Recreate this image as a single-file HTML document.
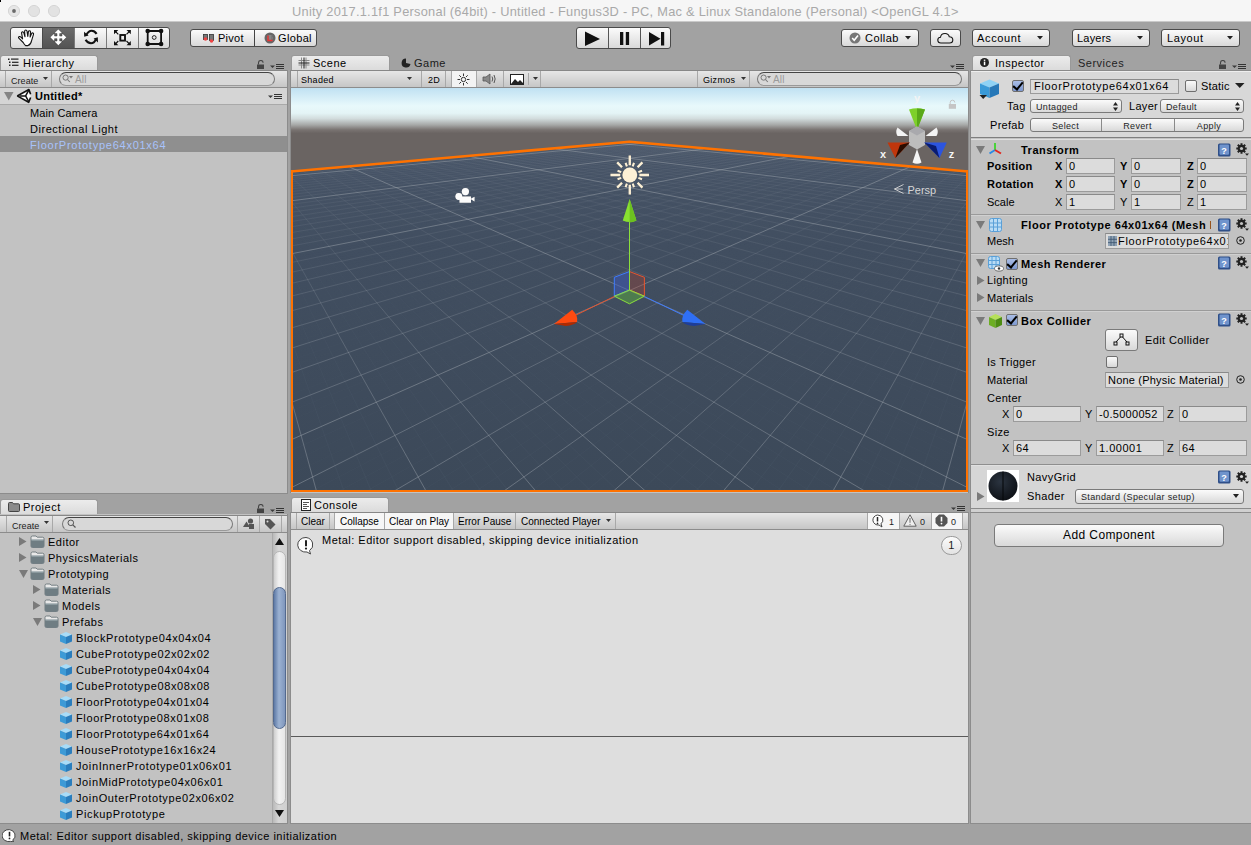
<!DOCTYPE html>
<html><head><meta charset="utf-8">
<style>
*{box-sizing:border-box;margin:0;padding:0}
html,body{width:1251px;height:845px;overflow:hidden;background:#a2a2a2;font-family:"Liberation Sans",sans-serif;font-size:11px;color:#000}
.a{position:absolute}
.t{position:absolute;white-space:nowrap;line-height:14px}
#title{left:0;top:0;width:1251px;height:22px;background:#f6f6f6;border-bottom:1px solid #c9c9c9}
.btn{position:absolute;background:linear-gradient(#fbfbfb,#d9d9d9);border:1px solid #7a7a7a;border-radius:3px}
.panel{position:absolute;background:#c2c2c2;border:1px solid #8a8a8a}
.tab{position:absolute;background:linear-gradient(#ececec,#dadada);border:1px solid #999;border-bottom:none;border-radius:3px 3px 0 0}
.ptb{position:absolute;background:linear-gradient(#e6e6e6,#c6c6c6);border-top:1px solid #878787;border-bottom:1px solid #8c8c8c}
.fld{position:absolute;background:#dcdcdc;border:1px solid #9b9b9b;border-top-color:#8a8a8a}
.hdr{font-weight:bold}
.ls{letter-spacing:0.5px}
.sm{font-size:9px;letter-spacing:0.3px}
.xs{font-size:9px;letter-spacing:0.35px;color:#1e1e1e}
.sm2{font-size:10px;letter-spacing:0px}
.b{font-weight:bold}
.chk{width:12px;height:12px;border:1px solid #6f6f6f;border-radius:2px;background:linear-gradient(#fafafa,#d8d8d8)}
.chk.on{background:linear-gradient(#a9bde6,#7d98cf)}
.chk.on::after{content:"";position:absolute;left:2px;top:-1px;width:4px;height:8px;border:solid #000;border-width:0 2px 2px 0;transform:rotate(40deg)}
.tb{border-color:#4a4a4a}
.srch{background:#d8d8d8;border:1px solid #777;border-top-color:#444;border-bottom-color:#999;border-radius:7px}
</style></head><body>
<div id="title" class="a"></div>
<svg class="a" style="left:0;top:0" width="70" height="22" viewBox="0 0 70 22"><circle cx="14" cy="11" r="5.6" fill="#e6e6e6" stroke="#d3d3d3" stroke-width="0.9"/><circle cx="14" cy="11" r="1.9" fill="#6a6a6a"/><circle cx="34" cy="11" r="5.6" fill="#e2e2e2" stroke="#d3d3d3" stroke-width="0.9"/><circle cx="54" cy="11" r="5.6" fill="#e2e2e2" stroke="#d3d3d3" stroke-width="0.9"/></svg>
<div class="t" id="ttl" style="left:292px;top:3.5px;color:#a9a9a9;font-size:12.8px;line-height:16px;letter-spacing:0.27px">Unity 2017.1.1f1 Personal (64bit) - Untitled - Fungus3D - PC, Mac &amp; Linux Standalone (Personal) &lt;OpenGL 4.1&gt;</div>

<!-- TOOLBAR -->
<div class="btn tb" style="left:10px;top:27px;width:160px;height:22px;overflow:hidden">
  <div class="a" style="left:31px;top:0;width:32px;height:20px;background:linear-gradient(#6a6a6a,#545454)"></div>
  <div class="a" style="left:31px;top:0;width:1px;height:20px;background:#4a4a4a"></div>
  <div class="a" style="left:63px;top:0;width:1px;height:20px;background:#7a7a7a"></div>
  <div class="a" style="left:95px;top:0;width:1px;height:20px;background:#7a7a7a"></div>
  <div class="a" style="left:127px;top:0;width:1px;height:20px;background:#7a7a7a"></div>
</div>
<!-- hand -->
<svg class="a" style="left:17px;top:29px" width="19" height="18" viewBox="0 0 19 18">
 <path d="M6.2 13.5 L1.8 9.2 Q1 8 2.3 7.6 Q3.2 7.4 4.2 8.4 L5.6 9.8 L4.6 4.2 Q4.4 2.9 5.6 2.8 Q6.5 2.8 6.9 4.2 L8 7.8 L7.6 2.2 Q7.7 1 8.8 1 Q9.8 1 10 2.2 L10.8 7.4 L11.4 2.6 Q11.6 1.6 12.6 1.7 Q13.6 1.9 13.5 3 L13.1 8 L14.6 4.6 Q15.1 3.7 16 4 Q16.8 4.4 16.5 5.4 L14.6 11.6 Q13.8 15.6 11 16.6 L8.6 16.6 Q7.2 15.4 6.2 13.5 Z" fill="#fff" stroke="#111" stroke-width="1.1" stroke-linejoin="round"/>
</svg>
<!-- move -->
<svg class="a" style="left:49px;top:28px" width="19" height="19" viewBox="0 0 19 19">
 <path d="M9.3 1 L13.8 5.6 L10.7 5.6 L10.7 8 L13 8 L13 4.9 L17.6 9.3 L13 13.8 L13 10.7 L10.7 10.7 L10.7 13 L13.8 13 L9.3 17.6 L4.8 13 L8 13 L8 10.7 L5.6 10.7 L5.6 13.8 L1 9.3 L5.6 4.9 L5.6 8 L8 8 L8 5.6 L4.8 5.6 Z" fill="#fff" stroke="#3a3a3a" stroke-width="0.5"/>
</svg>
<!-- rotate -->
<svg class="a" style="left:74px;top:26px" width="32" height="24" viewBox="0 0 32 24">
 <path d="M12.3 9 Q14.5 4.8 17.6 4.8 Q20.6 4.8 22.6 7.8" fill="none" stroke="#111" stroke-width="2.1"/>
 <path d="M10 5.8 L10.2 10.8 L14.6 9.6 Z" fill="#111"/>
 <path d="M11.6 13.8 Q13.6 17.3 17 17.3 Q20.2 17.3 21.8 13.4" fill="none" stroke="#111" stroke-width="2.1"/>
 <path d="M24 16.6 L23.8 11.3 L19.6 12.6 Z" fill="#111"/>
</svg>
<!-- scale -->
<svg class="a" style="left:106px;top:26px" width="32" height="24" viewBox="0 0 32 24">
 <rect x="14.3" y="9" width="4.7" height="5.6" fill="#eee" stroke="#111" stroke-width="1.9"/>
 <path d="M8.5 4.5 L12.3 8.3 M24.3 4.5 L20.5 8.3 M8.5 18.8 L12.3 15 M24.3 18.8 L20.5 15" stroke="#111" stroke-width="1.2"/>
 <path d="M8 4 L12.3 4 L8 8.3 Z M24.8 4 L20.5 4 L24.8 8.3 Z M8 19.2 L12.3 19.2 L8 14.9 Z M24.8 19.2 L20.5 19.2 L24.8 14.9 Z" fill="#111"/>
</svg>
<!-- rect -->
<svg class="a" style="left:138px;top:26px" width="32" height="24" viewBox="0 0 32 24">
 <path d="M9.7 5H23.1M9.7 18H23.1M9.7 5V18M23.1 5V18" stroke="#111" stroke-width="1.8"/>
 <circle cx="9.7" cy="5" r="2.3" fill="#111"/><circle cx="23.1" cy="5" r="2.3" fill="#111"/>
 <circle cx="9.7" cy="18" r="2.3" fill="#111"/><circle cx="23.1" cy="18" r="2.3" fill="#111"/>
 <circle cx="16.2" cy="11.5" r="1.9" fill="none" stroke="#111" stroke-width="0.9"/>
</svg>

<!-- pivot/global -->
<div class="btn tb" style="left:190px;top:29px;width:127px;height:18px">
  <div class="a" style="left:63px;top:0;width:1px;height:16px;background:#444"></div>
</div>
<svg class="a" style="left:203px;top:34px" width="12" height="9" viewBox="0 0 12 9">
 <rect x="0.5" y="0.5" width="4" height="5" fill="#777" stroke="#333" stroke-width="0.8"/><circle cx="2.5" cy="5" r="1.8" fill="#e44"/>
 <rect x="6.5" y="0.5" width="4" height="6" fill="#777" stroke="#333" stroke-width="0.8"/><circle cx="8.5" cy="7" r="1.8" fill="#e44"/>
</svg>
<div class="t" style="left:218px;top:31px;letter-spacing:0.25px">Pivot</div>
<svg class="a" style="left:264px;top:32px" width="12" height="12" viewBox="0 0 12 12">
 <circle cx="6" cy="6" r="5.5" fill="#666"/><path d="M3 6h6M6 3v6M3.5 4h5M3.5 8h5" stroke="#aaa" stroke-width="0.6"/>
 <path d="M4 3.5 V8.5 H8.5" fill="none" stroke="#e33" stroke-width="1.4"/>
</svg>
<div class="t" style="left:278px;top:31px;letter-spacing:0.35px">Global</div>

<!-- play -->
<div class="btn tb" style="left:576px;top:27px;width:95px;height:22px">
  <div class="a" style="left:31px;top:0;width:1px;height:20px;background:#555"></div>
  <div class="a" style="left:63px;top:0;width:1px;height:20px;background:#555"></div>
</div>
<svg class="a" style="left:576px;top:27px" width="95" height="22" viewBox="0 0 95 22">
 <path d="M9 4.5 L24 12 L9 19 Z" fill="#111"/>
 <rect x="44" y="5" width="3.3" height="13" fill="#111"/><rect x="49.8" y="5" width="3.3" height="13" fill="#111"/>
 <path d="M73 5 L84.5 11.8 L73 18.5 Z" fill="#111"/><rect x="85" y="5" width="3.2" height="13.5" fill="#111"/>
</svg>

<!-- collab -->
<div class="btn tb" style="left:841px;top:29px;width:78px;height:18px"></div>
<svg class="a" style="left:849px;top:32px" width="12" height="12" viewBox="0 0 12 12">
 <circle cx="6" cy="6" r="5.5" fill="#777"/><path d="M3.2 6 L5.2 8.2 L9 3.5" fill="none" stroke="#fff" stroke-width="1.6"/>
</svg>
<div class="t" style="left:865px;top:31px;letter-spacing:0.45px">Collab</div>
<svg class="a" style="left:905px;top:36px" width="7" height="4" viewBox="0 0 7 4"><path d="M0 0 L6 0 L3 3.5Z" fill="#222"/></svg>
<div class="btn tb" style="left:930px;top:29px;width:31px;height:18px"></div>
<svg class="a" style="left:937px;top:32px" width="17" height="12" viewBox="0 0 17 12">
 <path d="M4 11 Q0.8 11 0.8 8 Q0.8 5.5 3.5 5.3 Q4 1.5 8 1.5 Q11.5 1.5 12.3 4.8 Q15.8 5 15.8 8 Q15.8 11 12.5 11 Z" fill="none" stroke="#111" stroke-width="1.1"/>
</svg>
<div class="btn tb" style="left:972px;top:29px;width:78px;height:18px"></div>
<div class="t" style="left:977px;top:31px;letter-spacing:0.65px">Account</div>
<svg class="a" style="left:1037px;top:36px" width="7" height="4" viewBox="0 0 7 4"><path d="M0 0 L6 0 L3 3.5Z" fill="#222"/></svg>
<div class="btn tb" style="left:1072px;top:29px;width:78px;height:18px"></div>
<div class="t" style="left:1077px;top:31px;letter-spacing:0.2px">Layers</div>
<svg class="a" style="left:1137px;top:36px" width="7" height="4" viewBox="0 0 7 4"><path d="M0 0 L6 0 L3 3.5Z" fill="#222"/></svg>
<div class="btn tb" style="left:1161px;top:29px;width:79px;height:18px"></div>
<div class="t" style="left:1167px;top:31px;letter-spacing:0.6px">Layout</div>
<svg class="a" style="left:1227px;top:36px" width="7" height="4" viewBox="0 0 7 4"><path d="M0 0 L6 0 L3 3.5Z" fill="#222"/></svg>


<!-- panels -->
<!-- HIERARCHY -->
<div class="tab" style="left:0;top:55px;width:98px;height:16px"></div>
<svg class="a" style="left:7px;top:58px" width="13" height="9" viewBox="0 0 13 9">
 <rect x="1" y="0.5" width="1.5" height="1.5" fill="#222"/><rect x="4" y="0.5" width="7.5" height="1.2" fill="#222"/>
 <rect x="2" y="3.5" width="1.5" height="1.5" fill="#222"/><rect x="5" y="3.7" width="6.5" height="1.2" fill="#222"/>
 <rect x="2" y="6.5" width="1.5" height="1.5" fill="#222"/><rect x="5" y="6.7" width="6.5" height="1.2" fill="#222"/>
</svg>
<div class="t ls" style="left:23px;top:56px">Hierarchy</div>
<svg class="a lock" style="left:257px;top:60px" width="8" height="9" viewBox="0 0 8 9"><path d="M1.5 4.5 V2.8 A2.3 2.3 0 0 1 6.1 2.8" fill="none" stroke="#444" stroke-width="1.1"/><rect x="0" y="4.5" width="7" height="4.5" fill="#444"/></svg>
<svg class="a" style="left:269px;top:63px" width="16" height="7" viewBox="0 0 16 7"><path d="M1 2.5 L6 2.5 L3.5 5Z" fill="#3a3a3a"/><path d="M7 1.5h8M7 3.5h8M7 5.5h8" stroke="#333" stroke-width="1"/></svg>
<div class="a" style="left:0;top:70px;width:288px;height:424px;background:#c2c2c2;border-right:1px solid #8c8c8c;border-bottom:1px solid #8c8c8c"></div>
<div class="ptb" style="left:0;top:70px;width:287px;height:18px"></div>
<div class="a" style="left:5px;top:71px;width:1px;height:16px;background:#a8a8a8"></div>
<div class="a" style="left:51px;top:71px;width:1px;height:16px;background:#a8a8a8"></div>
<div class="t" style="left:11px;top:74px;color:#222;font-size:9px;letter-spacing:0.05px">Create</div>
<svg class="a" style="left:43px;top:77px" width="5" height="4" viewBox="0 0 5 4"><path d="M0 0 L5 0 L2.5 3Z" fill="#333"/></svg>
<div class="a srch" style="left:59px;top:72px;width:216px;height:14px"></div>
<svg class="a" style="left:62px;top:74px" width="12" height="9" viewBox="0 0 12 9"><circle cx="3.6" cy="3.6" r="2.6" fill="none" stroke="#777" stroke-width="1"/><path d="M5.5 5.5 L7.8 8" stroke="#777" stroke-width="1.1"/><path d="M7 2 L11 2 L9 4.5Z" fill="#777"/></svg>
<div class="t" style="left:75px;top:73px;color:#9a9a9a;font-size:10px;letter-spacing:0.2px">All</div>

<div class="a" style="left:0;top:88px;width:287px;height:17px;background:#d5d5d5;border-bottom:1px solid #a9a9a9"></div>
<svg class="a" style="left:4px;top:92px" width="10" height="9" viewBox="0 0 10 9"><path d="M0 0 L9.5 0 L4.75 8.5Z" fill="#858585"/></svg>
<svg class="a" style="left:14px;top:87px" width="20" height="18" viewBox="0 0 20 18">
 <path d="M3.2 8.9 L14.9 2.6 L16.6 8.9 L14.7 15.3 Z" fill="#fff"/>
 <path d="M3.2 8.9 L14.9 2.6 L16.6 7.3 M16.6 10.5 L14.7 15.3 L3.2 8.9" fill="none" stroke="#111" stroke-width="1.65" stroke-linejoin="round"/>
 <path d="M5.5 8.9 H11.6 L14.8 3.2 M11.6 8.9 L14.7 14.7" fill="none" stroke="#111" stroke-width="1.45"/>
</svg>
<div class="t" style="left:35px;top:89px;font-weight:bold;letter-spacing:0.25px">Untitled*</div>
<svg class="a" style="left:267px;top:93px" width="16" height="7" viewBox="0 0 16 7"><path d="M1 2.5 L6 2.5 L3.5 5Z" fill="#3a3a3a"/><path d="M7 1.5h8M7 3.5h8M7 5.5h8" stroke="#333" stroke-width="1"/></svg>
<div class="t" style="left:30px;top:106px;letter-spacing:0.13px">Main Camera</div>
<div class="t" style="left:30px;top:122px;letter-spacing:0.54px">Directional Light</div>
<div class="a" style="left:0;top:136px;width:287px;height:16px;background:#8f8f8f"></div>
<div class="t" style="left:30px;top:138px;color:#a8c2fb;letter-spacing:0.75px">FloorPrototype64x01x64</div>

<!-- SCENE -->
<div class="tab" style="left:291px;top:55px;width:99px;height:16px"></div>
<svg class="a" style="left:298px;top:57px" width="12" height="12" viewBox="0 0 12 12"><path d="M3.5 0.5V11.5M8 0.5V11.5M0.5 3.5H11.5M0.5 8H11.5" stroke="#888" stroke-width="1"/><path d="M6 0.5V11.5M0.5 6H11.5" stroke="#222" stroke-width="1"/></svg>
<div class="t ls" style="left:313px;top:56px">Scene</div>
<svg class="a" style="left:401px;top:58px" width="10" height="10" viewBox="0 0 10 10"><path d="M5 0.5 A4.5 4.5 0 1 0 9.5 6 L5 5 Z" fill="#222"/><circle cx="6.5" cy="3" r="1.2" fill="#a2a2a2"/></svg>
<div class="t ls" style="left:414px;top:56px;color:#1a1a1a">Game</div>
<svg class="a" style="left:949px;top:63px" width="16" height="7" viewBox="0 0 16 7"><path d="M1 2.5 L6 2.5 L3.5 5Z" fill="#3a3a3a"/><path d="M7 1.5h8M7 3.5h8M7 5.5h8" stroke="#333" stroke-width="1"/></svg>
<div class="a" style="left:290px;top:70px;width:679px;height:423px;background:#c2c2c2;border:1px solid #8c8c8c;border-top:none;border-bottom:none"></div>
<div class="ptb" style="left:291px;top:70px;width:677px;height:18px"></div>
<div class="a" style="left:297px;top:71px;width:1px;height:16px;background:#a8a8a8"></div>
<div class="t sm" style="left:301px;top:73px">Shaded</div>
<svg class="a" style="left:407px;top:77px" width="5" height="4" viewBox="0 0 5 4"><path d="M0 0 L5 0 L2.5 3Z" fill="#333"/></svg>
<div class="a" style="left:421px;top:71px;width:1px;height:16px;background:#a8a8a8"></div>
<div class="t sm" style="left:428px;top:73px">2D</div>
<div class="a" style="left:445px;top:71px;width:1px;height:16px;background:#a8a8a8"></div>
<div class="a" style="left:451px;top:71px;width:26px;height:16px;background:#f3f3f3;border-left:1px solid #a8a8a8;border-right:1px solid #a8a8a8"></div>
<svg class="a" style="left:457px;top:73px" width="13" height="13" viewBox="0 0 13 13"><circle cx="6.5" cy="6.5" r="2.2" fill="none" stroke="#333" stroke-width="1"/><path d="M6.5 0.5V3M6.5 10V12.5M0.5 6.5H3M10 6.5H12.5M2.3 2.3L4 4M9 9L10.7 10.7M2.3 10.7L4 9M9 4L10.7 2.3" stroke="#333" stroke-width="1"/></svg>
<svg class="a" style="left:482px;top:73px" width="15" height="12" viewBox="0 0 15 12"><path d="M1 4H4L8 1V11L4 8H1Z" fill="#888" stroke="#555" stroke-width="0.8"/><path d="M10 3.5Q11.5 6 10 8.5M12 2Q14.3 6 12 10" fill="none" stroke="#555" stroke-width="1"/></svg>
<div class="a" style="left:503px;top:71px;width:1px;height:16px;background:#a8a8a8"></div>
<svg class="a" style="left:510px;top:74px" width="14" height="11" viewBox="0 0 14 11"><rect x="0.5" y="0.5" width="13" height="10" fill="#fff" stroke="#222" stroke-width="1"/><path d="M1 10L5 5L8 8L10 6L13 9V10Z" fill="#222"/></svg>
<div class="a" style="left:528px;top:73px;width:1px;height:12px;background:#a8a8a8"></div>
<svg class="a" style="left:533px;top:77px" width="5" height="4" viewBox="0 0 5 4"><path d="M0 0 L5 0 L2.5 3Z" fill="#333"/></svg>
<div class="a" style="left:540px;top:71px;width:1px;height:16px;background:#a8a8a8"></div>
<div class="a" style="left:697px;top:71px;width:1px;height:16px;background:#a8a8a8"></div>
<div class="t sm" style="left:703px;top:73px">Gizmos</div>
<svg class="a" style="left:741px;top:77px" width="5" height="4" viewBox="0 0 5 4"><path d="M0 0 L5 0 L2.5 3Z" fill="#333"/></svg>
<div class="a" style="left:749px;top:71px;width:1px;height:16px;background:#a8a8a8"></div>
<div class="a srch" style="left:757px;top:72px;width:205px;height:14px"></div>
<svg class="a" style="left:760px;top:74px" width="12" height="9" viewBox="0 0 12 9"><circle cx="3.6" cy="3.6" r="2.6" fill="none" stroke="#777" stroke-width="1"/><path d="M5.5 5.5 L7.8 8" stroke="#777" stroke-width="1.1"/><path d="M7 2 L11 2 L9 4.5Z" fill="#777"/></svg>
<div class="t" style="left:773px;top:73px;color:#9a9a9a;font-size:10px;letter-spacing:0.2px">All</div>
<svg class="a" style="left:291px;top:88px" width="677" height="404" viewBox="0 0 677 404">
<defs>
 <linearGradient id="sky" x1="0" y1="0" x2="0" y2="1">
  <stop offset="0" stop-color="#c0e1f2"/><stop offset="0.4" stop-color="#e8f9fb"/><stop offset="0.56" stop-color="#e4f4f6"/>
  <stop offset="0.68" stop-color="#d2dcdd"/><stop offset="0.82" stop-color="#a6a8a7"/><stop offset="0.93" stop-color="#797371"/><stop offset="1" stop-color="#6b6563"/>
 </linearGradient>
 <linearGradient id="flr" x1="0" y1="54.5" x2="0" y2="405" gradientUnits="userSpaceOnUse">
  <stop offset="0" stop-color="#485568"/><stop offset="0.3" stop-color="#414e60"/><stop offset="1" stop-color="#3c4959"/>
 </linearGradient>
 <linearGradient id="lg" x1="0" y1="54.5" x2="0" y2="404" gradientUnits="userSpaceOnUse">
  <stop offset="0" stop-color="#a3aab2" stop-opacity="0.05"/><stop offset="0.3" stop-color="#a3aab2" stop-opacity="0.13"/><stop offset="0.6" stop-color="#a3aab2" stop-opacity="0.3"/><stop offset="1" stop-color="#a3aab2" stop-opacity="0.44"/>
 </linearGradient>
 <clipPath id="fc"><polygon points="338.5,54.5 2022.1,202.5 3625.4,437.0 -2948.4,437.0 -1345.1,202.5"/></clipPath>
</defs>
<rect x="0" y="0" width="677" height="45" fill="url(#sky)"/>
<rect x="0" y="45" width="677" height="360" fill="#6a6462"/>
<polygon points="338.5,54.5 2022.1,202.5 3625.4,437.0 -2948.4,437.0 -1345.1,202.5" fill="url(#flr)"/>
<g clip-path="url(#fc)">
<path d="M-2917.85 436.96L-1311.83 199.58L-1313.36 199.71L-2919.28 436.96ZM-2888.01 436.96L-1280.36 196.81L-1281.85 196.94L-2889.45 436.96ZM-2858.18 436.96L-1249.83 194.13L-1251.28 194.25L-2859.61 436.96ZM-2798.52 436.96L-1191.45 188.99L-1192.81 189.11L-2799.95 436.96ZM-2768.69 436.96L-1163.51 186.54L-1164.83 186.65L-2770.12 436.96ZM-2738.85 436.96L-1136.36 184.15L-1137.65 184.26L-2740.29 436.96ZM-2679.19 436.96L-1084.30 179.57L-1085.52 179.68L-2680.62 436.96ZM-2649.36 436.96L-1059.33 177.37L-1060.51 177.48L-2650.79 436.96ZM-2619.53 436.96L-1035.03 175.24L-1036.18 175.34L-2620.96 436.96ZM-2559.86 436.96L-988.32 171.13L-989.42 171.23L-2561.30 436.96ZM-2530.03 436.96L-965.87 169.16L-966.94 169.25L-2531.46 436.96ZM-2500.20 436.96L-943.99 167.23L-945.03 167.32L-2501.63 436.96ZM-2440.54 436.96L-901.85 163.53L-902.84 163.61L-2441.97 436.96ZM-2410.70 436.96L-881.55 161.74L-882.52 161.83L-2412.14 436.96ZM-2380.87 436.96L-861.75 160.00L-862.69 160.08L-2382.31 436.96ZM-2321.21 436.96L-823.54 156.64L-824.43 156.72L-2322.64 436.96ZM-2291.38 436.96L-805.10 155.02L-805.98 155.10L-2292.81 436.96ZM-2261.55 436.96L-787.09 153.44L-787.95 153.51L-2262.98 436.96ZM-2201.88 436.96L-752.28 150.38L-753.10 150.45L-2203.31 436.96ZM-2172.05 436.96L-735.46 148.90L-736.26 148.97L-2173.48 436.96ZM-2142.22 436.96L-719.01 147.45L-719.79 147.52L-2143.65 436.96ZM-2082.56 436.96L-687.18 144.65L-687.92 144.72L-2083.99 436.96ZM-2052.72 436.96L-671.77 143.30L-672.50 143.36L-2054.16 436.96ZM-2022.89 436.96L-656.68 141.97L-657.40 142.03L-2024.32 436.96ZM-1963.23 436.96L-627.45 139.40L-628.14 139.46L-1964.66 436.96ZM-1933.40 436.96L-613.28 138.15L-613.95 138.21L-1934.83 436.96ZM-1903.56 436.96L-599.40 136.93L-600.06 136.99L-1905.00 436.96ZM-1843.90 436.96L-572.46 134.56L-573.10 134.62L-1845.33 436.96ZM-1814.07 436.96L-559.39 133.42L-560.02 133.47L-1815.50 436.96ZM-1784.24 436.96L-546.58 132.29L-547.19 132.34L-1785.67 436.96ZM-1724.57 436.96L-521.68 130.10L-522.27 130.15L-1726.01 436.96ZM-1694.74 436.96L-509.58 129.04L-510.16 129.09L-1696.17 436.96ZM-1664.91 436.96L-497.71 127.99L-498.28 128.04L-1666.34 436.96ZM-1605.25 436.96L-474.63 125.96L-475.17 126.01L-1606.68 436.96ZM-1575.41 436.96L-463.40 124.97L-463.94 125.02L-1576.85 436.96ZM-1545.58 436.96L-452.38 124.01L-452.90 124.05L-1547.02 436.96ZM-1485.92 436.96L-430.92 122.12L-431.42 122.16L-1487.35 436.96ZM-1456.09 436.96L-420.47 121.20L-420.97 121.24L-1457.52 436.96ZM-1426.26 436.96L-410.20 120.30L-410.69 120.34L-1427.69 436.96ZM-1366.59 436.96L-390.20 118.54L-390.67 118.58L-1368.02 436.96ZM-1336.76 436.96L-380.45 117.68L-380.91 117.72L-1338.19 436.96ZM-1306.93 436.96L-370.87 116.84L-371.32 116.88L-1308.36 436.96ZM-1247.27 436.96L-352.18 115.19L-352.62 115.23L-1248.70 436.96ZM-1217.43 436.96L-343.06 114.39L-343.50 114.43L-1218.87 436.96ZM-1187.60 436.96L-334.10 113.60L-334.52 113.64L-1189.03 436.96ZM-1127.94 436.96L-316.59 112.07L-317.01 112.10L-1129.37 436.96ZM-1098.11 436.96L-308.05 111.31L-308.46 111.35L-1099.54 436.96ZM-1068.27 436.96L-299.65 110.58L-300.05 110.61L-1069.71 436.96ZM-1008.61 436.96L-283.22 109.13L-283.61 109.17L-1010.04 436.96ZM-978.78 436.96L-275.20 108.43L-275.58 108.46L-980.21 436.96ZM-948.95 436.96L-267.30 107.73L-267.68 107.76L-950.38 436.96ZM-889.28 436.96L-251.86 106.37L-252.23 106.41L-890.72 436.96ZM-859.45 436.96L-244.31 105.71L-244.67 105.74L-860.88 436.96ZM-829.62 436.96L-236.88 105.06L-237.23 105.09L-831.05 436.96ZM-769.96 436.96L-222.34 103.78L-222.68 103.81L-771.39 436.96ZM-740.13 436.96L-215.22 103.15L-215.56 103.18L-741.56 436.96ZM-710.29 436.96L-208.21 102.54L-208.54 102.57L-711.73 436.96ZM-650.63 436.96L-194.49 101.33L-194.81 101.36L-652.06 436.96ZM-620.80 436.96L-187.77 100.74L-188.09 100.77L-622.23 436.96ZM-590.97 436.96L-181.15 100.16L-181.46 100.18L-592.40 436.96ZM-531.30 436.96L-168.18 99.02L-168.48 99.04L-532.73 436.96ZM-501.47 436.96L-161.83 98.46L-162.13 98.48L-502.90 436.96ZM-471.64 436.96L-155.56 97.91L-155.86 97.93L-473.07 436.96ZM-411.98 436.96L-143.28 96.83L-143.57 96.85L-413.41 436.96ZM-382.14 436.96L-137.27 96.30L-137.55 96.32L-383.58 436.96ZM-352.31 436.96L-131.33 95.78L-131.61 95.80L-353.74 436.96ZM-292.65 436.96L-119.69 94.75L-119.97 94.78L-294.08 436.96ZM-262.82 436.96L-113.99 94.25L-114.26 94.27L-264.25 436.96ZM-232.98 436.96L-108.35 93.76L-108.62 93.78L-234.42 436.96ZM-173.32 436.96L-97.30 92.78L-97.57 92.81L-174.75 436.96ZM-143.49 436.96L-91.88 92.31L-92.14 92.33L-144.92 436.96ZM-113.66 436.96L-86.53 91.84L-86.79 91.86L-115.09 436.96ZM-53.99 436.96L-76.03 90.91L-76.28 90.94L-55.43 436.96ZM-24.16 436.96L-70.88 90.46L-71.12 90.48L-25.59 436.96ZM5.67 436.96L-65.79 90.01L-66.03 90.03L4.24 436.96ZM65.33 436.96L-55.79 89.13L-56.03 89.15L63.90 436.96ZM95.16 436.96L-50.88 88.70L-51.12 88.72L93.73 436.96ZM125.00 436.96L-46.03 88.28L-46.27 88.30L123.56 436.96ZM184.66 436.96L-36.51 87.44L-36.74 87.46L183.23 436.96ZM214.49 436.96L-31.83 87.03L-32.05 87.05L213.06 436.96ZM244.32 436.96L-27.21 86.62L-27.43 86.64L242.89 436.96ZM303.99 436.96L-18.12 85.82L-18.34 85.84L302.56 436.96ZM333.82 436.96L-13.66 85.43L-13.87 85.45L332.39 436.96ZM363.65 436.96L-9.24 85.04L-9.45 85.06L362.22 436.96ZM423.31 436.96L-0.57 84.28L-0.77 84.30L421.88 436.96ZM453.15 436.96L3.70 83.90L3.50 83.92L451.71 436.96ZM482.98 436.96L7.92 83.53L7.72 83.55L481.55 436.96ZM542.64 436.96L16.21 82.80L16.02 82.82L541.21 436.96ZM572.47 436.96L20.29 82.44L20.10 82.46L571.04 436.96ZM602.31 436.96L24.33 82.09L24.13 82.11L600.87 436.96ZM661.97 436.96L32.27 81.39L32.08 81.41L660.54 436.96ZM691.80 436.96L36.17 81.05L35.98 81.06L690.37 436.96ZM721.63 436.96L40.03 80.71L39.85 80.72L720.20 436.96ZM781.30 436.96L47.64 80.04L47.46 80.05L779.86 436.96ZM811.13 436.96L51.38 79.71L51.20 79.73L809.70 436.96ZM840.96 436.96L55.08 79.38L54.90 79.40L839.53 436.96ZM900.62 436.96L62.37 78.74L62.20 78.76L899.19 436.96ZM930.45 436.96L65.96 78.43L65.79 78.44L929.02 436.96ZM960.29 436.96L69.51 78.12L69.34 78.13L958.85 436.96ZM1019.95 436.96L76.51 77.50L76.34 77.52L1018.52 436.96ZM1049.78 436.96L79.95 77.20L79.79 77.21L1048.35 436.96ZM1079.61 436.96L83.36 76.90L83.20 76.91L1078.18 436.96ZM1139.28 436.96L90.08 76.31L89.92 76.32L1137.85 436.96ZM1169.11 436.96L93.39 76.02L93.23 76.03L1167.68 436.96ZM1198.94 436.96L96.66 75.73L96.51 75.74L1197.51 436.96ZM1258.60 436.96L103.12 75.16L102.97 75.17L1257.17 436.96ZM1288.44 436.96L106.30 74.88L106.15 74.89L1287.00 436.96ZM1318.27 436.96L109.45 74.60L109.30 74.62L1316.84 436.96ZM1377.93 436.96L115.66 74.06L115.51 74.07L1376.50 436.96ZM1407.76 436.96L118.72 73.79L118.58 73.80L1406.33 436.96ZM1437.60 436.96L121.75 73.52L121.61 73.53L1436.16 436.96ZM1497.26 436.96L127.73 73.00L127.59 73.01L1495.83 436.96ZM1527.09 436.96L130.68 72.74L130.54 72.75L1525.66 436.96ZM1556.92 436.96L133.60 72.48L133.46 72.49L1555.49 436.96ZM1616.59 436.96L139.36 71.97L139.22 71.99L1615.15 436.96ZM1646.42 436.96L142.20 71.72L142.06 71.74L1644.99 436.96ZM1676.25 436.96L145.01 71.48L144.88 71.49L1674.82 436.96ZM1735.91 436.96L150.56 70.99L150.43 71.00L1734.48 436.96ZM1765.74 436.96L153.30 70.75L153.17 70.76L1764.31 436.96ZM1795.58 436.96L156.01 70.51L155.88 70.52L1794.14 436.96ZM1855.24 436.96L161.37 70.04L161.24 70.05L1853.81 436.96ZM1885.07 436.96L164.01 69.81L163.88 69.82L1883.64 436.96ZM1914.90 436.96L166.62 69.58L166.50 69.59L1913.47 436.96ZM1974.57 436.96L171.79 69.12L171.67 69.13L1973.14 436.96ZM2004.40 436.96L174.34 68.90L174.22 68.91L2002.97 436.96ZM2034.23 436.96L176.87 68.68L176.75 68.69L2032.80 436.96ZM2093.89 436.96L181.86 68.24L181.74 68.25L2092.46 436.96ZM2123.73 436.96L184.32 68.02L184.21 68.03L2122.29 436.96ZM2153.56 436.96L186.77 67.81L186.65 67.82L2152.13 436.96ZM2213.22 436.96L191.59 67.38L191.47 67.39L2211.79 436.96ZM2243.05 436.96L193.97 67.17L193.86 67.18L2241.62 436.96ZM2272.88 436.96L196.33 66.96L196.22 66.97L2271.45 436.96ZM2332.55 436.96L200.99 66.55L200.88 66.56L2331.12 436.96ZM2362.38 436.96L203.30 66.35L203.19 66.36L2360.95 436.96ZM2392.21 436.96L205.58 66.15L205.47 66.16L2390.78 436.96ZM2451.88 436.96L210.09 65.75L209.98 65.76L2450.44 436.96ZM2481.71 436.96L212.32 65.56L212.21 65.57L2480.28 436.96ZM2511.54 436.96L214.53 65.36L214.42 65.37L2510.11 436.96ZM2571.20 436.96L218.90 64.98L218.79 64.99L2569.77 436.96ZM2601.03 436.96L221.05 64.79L220.95 64.80L2599.60 436.96ZM2630.87 436.96L223.19 64.60L223.09 64.61L2629.43 436.96ZM2690.53 436.96L227.42 64.23L227.32 64.24L2689.10 436.96ZM2720.36 436.96L229.51 64.05L229.41 64.06L2718.93 436.96ZM2750.19 436.96L231.59 63.86L231.49 63.87L2748.76 436.96ZM2809.86 436.96L235.68 63.50L235.59 63.51L2808.43 436.96ZM2839.69 436.96L237.71 63.33L237.61 63.33L2838.26 436.96ZM2869.52 436.96L239.72 63.15L239.62 63.16L2868.09 436.96ZM2929.18 436.96L243.69 62.80L243.60 62.81L2927.75 436.96ZM2959.02 436.96L245.66 62.63L245.56 62.64L2957.58 436.96ZM2988.85 436.96L247.60 62.46L247.51 62.46L2987.42 436.96ZM3048.51 436.96L251.46 62.12L251.37 62.13L3047.08 436.96ZM3078.34 436.96L253.36 61.95L253.27 61.96L3076.91 436.96ZM3108.17 436.96L255.25 61.78L255.16 61.79L3106.74 436.96ZM3167.84 436.96L258.99 61.45L258.90 61.46L3166.41 436.96ZM3197.67 436.96L260.84 61.29L260.75 61.30L3196.24 436.96ZM3227.50 436.96L262.68 61.13L262.59 61.14L3226.07 436.96ZM3287.17 436.96L266.31 60.81L266.22 60.82L3285.73 436.96ZM3317.00 436.96L268.10 60.65L268.01 60.66L3315.57 436.96ZM3346.83 436.96L269.88 60.50L269.80 60.50L3345.40 436.96ZM3406.49 436.96L273.41 60.19L273.32 60.19L3405.06 436.96ZM3436.32 436.96L275.15 60.03L275.07 60.04L3434.89 436.96ZM3466.16 436.96L276.88 59.88L276.80 59.89L3464.72 436.96ZM3525.82 436.96L280.31 59.58L280.23 59.59L3524.39 436.96ZM3555.65 436.96L282.00 59.43L281.92 59.44L3554.22 436.96ZM3585.48 436.96L283.68 59.28L283.60 59.29L3584.05 436.96ZM3564.06 427.99L3559.38 427.31L287.01 58.99L286.93 59.00ZM3469.63 414.18L3465.26 413.54L288.66 58.85L288.58 58.85ZM3381.35 401.27L3377.25 400.68L290.30 58.70L290.22 58.71ZM3220.97 377.82L3217.36 377.29L293.53 58.42L293.46 58.42ZM3147.92 367.14L3144.52 366.64L295.13 58.28L295.06 58.28ZM3079.07 357.07L3075.87 356.60L296.73 58.14L296.65 58.14ZM2952.63 338.58L2949.76 338.16L299.87 57.86L299.80 57.87ZM2894.44 330.07L2891.72 329.67L301.43 57.72L301.36 57.73ZM2839.25 322.00L2836.67 321.62L302.98 57.59L302.91 57.59ZM2737.01 307.05L2734.68 306.71L306.05 57.32L305.97 57.32ZM2689.56 300.11L2687.34 299.79L307.56 57.18L307.49 57.19ZM2644.34 293.50L2642.22 293.19L309.07 57.05L309.00 57.06ZM2559.96 281.16L2558.03 280.88L312.05 56.79L311.98 56.80ZM2520.54 275.39L2518.69 275.12L313.53 56.66L313.46 56.67ZM2482.81 269.88L2481.04 269.62L315.00 56.53L314.93 56.54ZM2411.99 259.52L2410.36 259.28L317.90 56.27L317.83 56.28ZM2378.71 254.65L2377.15 254.42L319.34 56.15L319.27 56.15ZM2346.75 249.98L2345.25 249.76L320.77 56.02L320.70 56.03ZM2286.47 241.16L2285.08 240.96L323.60 55.77L323.53 55.78ZM2258.01 237.00L2256.67 236.81L325.00 55.65L324.93 55.66ZM2230.59 232.99L2229.30 232.80L326.39 55.53L326.33 55.53ZM2178.65 225.40L2177.45 225.22L329.15 55.29L329.08 55.29ZM2154.04 221.80L2152.88 221.63L330.52 55.17L330.45 55.17ZM2130.26 218.32L2129.13 218.16L331.87 55.05L331.81 55.05ZM2085.04 211.71L2084.00 211.56L334.56 54.81L334.50 54.82ZM2063.54 208.56L2062.52 208.42L335.89 54.69L335.83 54.70ZM2042.72 205.52L2041.73 205.38L337.22 54.58L337.15 54.58Z" fill="#8d99a6" fill-opacity="0.06"/>
<path d="M3594.85 436.96L1988.83 199.58L1990.36 199.71L3596.28 436.96ZM3565.01 436.96L1957.36 196.81L1958.85 196.94L3566.45 436.96ZM3535.18 436.96L1926.83 194.13L1928.28 194.25L3536.61 436.96ZM3475.52 436.96L1868.45 188.99L1869.81 189.11L3476.95 436.96ZM3445.69 436.96L1840.51 186.54L1841.83 186.65L3447.12 436.96ZM3415.85 436.96L1813.36 184.15L1814.65 184.26L3417.29 436.96ZM3356.19 436.96L1761.30 179.57L1762.52 179.68L3357.62 436.96ZM3326.36 436.96L1736.33 177.37L1737.51 177.48L3327.79 436.96ZM3296.53 436.96L1712.03 175.24L1713.18 175.34L3297.96 436.96ZM3236.86 436.96L1665.32 171.13L1666.42 171.23L3238.30 436.96ZM3207.03 436.96L1642.87 169.16L1643.94 169.25L3208.46 436.96ZM3177.20 436.96L1620.99 167.23L1622.03 167.32L3178.63 436.96ZM3117.54 436.96L1578.85 163.53L1579.84 163.61L3118.97 436.96ZM3087.70 436.96L1558.55 161.74L1559.52 161.83L3089.14 436.96ZM3057.87 436.96L1538.75 160.00L1539.69 160.08L3059.31 436.96ZM2998.21 436.96L1500.54 156.64L1501.43 156.72L2999.64 436.96ZM2968.38 436.96L1482.10 155.02L1482.98 155.10L2969.81 436.96ZM2938.55 436.96L1464.09 153.44L1464.95 153.51L2939.98 436.96ZM2878.88 436.96L1429.28 150.38L1430.10 150.45L2880.31 436.96ZM2849.05 436.96L1412.46 148.90L1413.26 148.97L2850.48 436.96ZM2819.22 436.96L1396.01 147.45L1396.79 147.52L2820.65 436.96ZM2759.56 436.96L1364.18 144.65L1364.92 144.72L2760.99 436.96ZM2729.72 436.96L1348.77 143.30L1349.50 143.36L2731.16 436.96ZM2699.89 436.96L1333.68 141.97L1334.40 142.03L2701.32 436.96ZM2640.23 436.96L1304.45 139.40L1305.14 139.46L2641.66 436.96ZM2610.40 436.96L1290.28 138.15L1290.95 138.21L2611.83 436.96ZM2580.56 436.96L1276.40 136.93L1277.06 136.99L2582.00 436.96ZM2520.90 436.96L1249.46 134.56L1250.10 134.62L2522.33 436.96ZM2491.07 436.96L1236.39 133.42L1237.02 133.47L2492.50 436.96ZM2461.24 436.96L1223.58 132.29L1224.19 132.34L2462.67 436.96ZM2401.57 436.96L1198.68 130.10L1199.27 130.15L2403.01 436.96ZM2371.74 436.96L1186.58 129.04L1187.16 129.09L2373.17 436.96ZM2341.91 436.96L1174.71 127.99L1175.28 128.04L2343.34 436.96ZM2282.25 436.96L1151.63 125.96L1152.17 126.01L2283.68 436.96ZM2252.41 436.96L1140.40 124.97L1140.94 125.02L2253.85 436.96ZM2222.58 436.96L1129.38 124.01L1129.90 124.05L2224.02 436.96ZM2162.92 436.96L1107.92 122.12L1108.42 122.16L2164.35 436.96ZM2133.09 436.96L1097.47 121.20L1097.97 121.24L2134.52 436.96ZM2103.26 436.96L1087.20 120.30L1087.69 120.34L2104.69 436.96ZM2043.59 436.96L1067.20 118.54L1067.67 118.58L2045.02 436.96ZM2013.76 436.96L1057.45 117.68L1057.91 117.72L2015.19 436.96ZM1983.93 436.96L1047.87 116.84L1048.32 116.88L1985.36 436.96ZM1924.27 436.96L1029.18 115.19L1029.62 115.23L1925.70 436.96ZM1894.43 436.96L1020.06 114.39L1020.50 114.43L1895.87 436.96ZM1864.60 436.96L1011.10 113.60L1011.52 113.64L1866.03 436.96ZM1804.94 436.96L993.59 112.07L994.01 112.10L1806.37 436.96ZM1775.11 436.96L985.05 111.31L985.46 111.35L1776.54 436.96ZM1745.27 436.96L976.65 110.58L977.05 110.61L1746.71 436.96ZM1685.61 436.96L960.22 109.13L960.61 109.17L1687.04 436.96ZM1655.78 436.96L952.20 108.43L952.58 108.46L1657.21 436.96ZM1625.95 436.96L944.30 107.73L944.68 107.76L1627.38 436.96ZM1566.28 436.96L928.86 106.37L929.23 106.41L1567.72 436.96ZM1536.45 436.96L921.31 105.71L921.67 105.74L1537.88 436.96ZM1506.62 436.96L913.88 105.06L914.23 105.09L1508.05 436.96ZM1446.96 436.96L899.34 103.78L899.68 103.81L1448.39 436.96ZM1417.13 436.96L892.22 103.15L892.56 103.18L1418.56 436.96ZM1387.29 436.96L885.21 102.54L885.54 102.57L1388.73 436.96ZM1327.63 436.96L871.49 101.33L871.81 101.36L1329.06 436.96ZM1297.80 436.96L864.77 100.74L865.09 100.77L1299.23 436.96ZM1267.97 436.96L858.15 100.16L858.46 100.18L1269.40 436.96ZM1208.30 436.96L845.18 99.02L845.48 99.04L1209.73 436.96ZM1178.47 436.96L838.83 98.46L839.13 98.48L1179.90 436.96ZM1148.64 436.96L832.56 97.91L832.86 97.93L1150.07 436.96ZM1088.98 436.96L820.28 96.83L820.57 96.85L1090.41 436.96ZM1059.14 436.96L814.27 96.30L814.55 96.32L1060.58 436.96ZM1029.31 436.96L808.33 95.78L808.61 95.80L1030.74 436.96ZM969.65 436.96L796.69 94.75L796.97 94.78L971.08 436.96ZM939.82 436.96L790.99 94.25L791.26 94.27L941.25 436.96ZM909.98 436.96L785.35 93.76L785.62 93.78L911.42 436.96ZM850.32 436.96L774.30 92.78L774.57 92.81L851.75 436.96ZM820.49 436.96L768.88 92.31L769.14 92.33L821.92 436.96ZM790.66 436.96L763.53 91.84L763.79 91.86L792.09 436.96ZM730.99 436.96L753.03 90.91L753.28 90.94L732.43 436.96ZM701.16 436.96L747.88 90.46L748.12 90.48L702.59 436.96ZM671.33 436.96L742.79 90.01L743.03 90.03L672.76 436.96ZM611.67 436.96L732.79 89.13L733.03 89.15L613.10 436.96ZM581.84 436.96L727.88 88.70L728.12 88.72L583.27 436.96ZM552.00 436.96L723.03 88.28L723.27 88.30L553.44 436.96ZM492.34 436.96L713.51 87.44L713.74 87.46L493.77 436.96ZM462.51 436.96L708.83 87.03L709.05 87.05L463.94 436.96ZM432.68 436.96L704.21 86.62L704.43 86.64L434.11 436.96ZM373.01 436.96L695.12 85.82L695.34 85.84L374.44 436.96ZM343.18 436.96L690.66 85.43L690.87 85.45L344.61 436.96ZM313.35 436.96L686.24 85.04L686.45 85.06L314.78 436.96ZM253.69 436.96L677.57 84.28L677.77 84.30L255.12 436.96ZM223.85 436.96L673.30 83.90L673.50 83.92L225.29 436.96ZM194.02 436.96L669.08 83.53L669.28 83.55L195.45 436.96ZM134.36 436.96L660.79 82.80L660.98 82.82L135.79 436.96ZM104.53 436.96L656.71 82.44L656.90 82.46L105.96 436.96ZM74.69 436.96L652.67 82.09L652.87 82.11L76.13 436.96ZM15.03 436.96L644.73 81.39L644.92 81.41L16.46 436.96ZM-14.80 436.96L640.83 81.05L641.02 81.06L-13.37 436.96ZM-44.63 436.96L636.97 80.71L637.15 80.72L-43.20 436.96ZM-104.30 436.96L629.36 80.04L629.54 80.05L-102.86 436.96ZM-134.13 436.96L625.62 79.71L625.80 79.73L-132.70 436.96ZM-163.96 436.96L621.92 79.38L622.10 79.40L-162.53 436.96ZM-223.62 436.96L614.63 78.74L614.80 78.76L-222.19 436.96ZM-253.45 436.96L611.04 78.43L611.21 78.44L-252.02 436.96ZM-283.29 436.96L607.49 78.12L607.66 78.13L-281.85 436.96ZM-342.95 436.96L600.49 77.50L600.66 77.52L-341.52 436.96ZM-372.78 436.96L597.05 77.20L597.21 77.21L-371.35 436.96ZM-402.61 436.96L593.64 76.90L593.80 76.91L-401.18 436.96ZM-462.28 436.96L586.92 76.31L587.08 76.32L-460.85 436.96ZM-492.11 436.96L583.61 76.02L583.77 76.03L-490.68 436.96ZM-521.94 436.96L580.34 75.73L580.49 75.74L-520.51 436.96ZM-581.60 436.96L573.88 75.16L574.03 75.17L-580.17 436.96ZM-611.44 436.96L570.70 74.88L570.85 74.89L-610.00 436.96ZM-641.27 436.96L567.55 74.60L567.70 74.62L-639.84 436.96ZM-700.93 436.96L561.34 74.06L561.49 74.07L-699.50 436.96ZM-730.76 436.96L558.28 73.79L558.42 73.80L-729.33 436.96ZM-760.60 436.96L555.25 73.52L555.39 73.53L-759.16 436.96ZM-820.26 436.96L549.27 73.00L549.41 73.01L-818.83 436.96ZM-850.09 436.96L546.32 72.74L546.46 72.75L-848.66 436.96ZM-879.92 436.96L543.40 72.48L543.54 72.49L-878.49 436.96ZM-939.59 436.96L537.64 71.97L537.78 71.99L-938.15 436.96ZM-969.42 436.96L534.80 71.72L534.94 71.74L-967.99 436.96ZM-999.25 436.96L531.99 71.48L532.12 71.49L-997.82 436.96ZM-1058.91 436.96L526.44 70.99L526.57 71.00L-1057.48 436.96ZM-1088.74 436.96L523.70 70.75L523.83 70.76L-1087.31 436.96ZM-1118.58 436.96L520.99 70.51L521.12 70.52L-1117.14 436.96ZM-1178.24 436.96L515.63 70.04L515.76 70.05L-1176.81 436.96ZM-1208.07 436.96L512.99 69.81L513.12 69.82L-1206.64 436.96ZM-1237.90 436.96L510.38 69.58L510.50 69.59L-1236.47 436.96ZM-1297.57 436.96L505.21 69.12L505.33 69.13L-1296.14 436.96ZM-1327.40 436.96L502.66 68.90L502.78 68.91L-1325.97 436.96ZM-1357.23 436.96L500.13 68.68L500.25 68.69L-1355.80 436.96ZM-1416.89 436.96L495.14 68.24L495.26 68.25L-1415.46 436.96ZM-1446.73 436.96L492.68 68.02L492.79 68.03L-1445.29 436.96ZM-1476.56 436.96L490.23 67.81L490.35 67.82L-1475.13 436.96ZM-1536.22 436.96L485.41 67.38L485.53 67.39L-1534.79 436.96ZM-1566.05 436.96L483.03 67.17L483.14 67.18L-1564.62 436.96ZM-1595.88 436.96L480.67 66.96L480.78 66.97L-1594.45 436.96ZM-1655.55 436.96L476.01 66.55L476.12 66.56L-1654.12 436.96ZM-1685.38 436.96L473.70 66.35L473.81 66.36L-1683.95 436.96ZM-1715.21 436.96L471.42 66.15L471.53 66.16L-1713.78 436.96ZM-1774.88 436.96L466.91 65.75L467.02 65.76L-1773.44 436.96ZM-1804.71 436.96L464.68 65.56L464.79 65.57L-1803.28 436.96ZM-1834.54 436.96L462.47 65.36L462.58 65.37L-1833.11 436.96ZM-1894.20 436.96L458.10 64.98L458.21 64.99L-1892.77 436.96ZM-1924.03 436.96L455.95 64.79L456.05 64.80L-1922.60 436.96ZM-1953.87 436.96L453.81 64.60L453.91 64.61L-1952.43 436.96ZM-2013.53 436.96L449.58 64.23L449.68 64.24L-2012.10 436.96ZM-2043.36 436.96L447.49 64.05L447.59 64.06L-2041.93 436.96ZM-2073.19 436.96L445.41 63.86L445.51 63.87L-2071.76 436.96ZM-2132.86 436.96L441.32 63.50L441.41 63.51L-2131.43 436.96ZM-2162.69 436.96L439.29 63.33L439.39 63.33L-2161.26 436.96ZM-2192.52 436.96L437.28 63.15L437.38 63.16L-2191.09 436.96ZM-2252.18 436.96L433.31 62.80L433.40 62.81L-2250.75 436.96ZM-2282.02 436.96L431.34 62.63L431.44 62.64L-2280.58 436.96ZM-2311.85 436.96L429.40 62.46L429.49 62.46L-2310.42 436.96ZM-2371.51 436.96L425.54 62.12L425.63 62.13L-2370.08 436.96ZM-2401.34 436.96L423.64 61.95L423.73 61.96L-2399.91 436.96ZM-2431.17 436.96L421.75 61.78L421.84 61.79L-2429.74 436.96ZM-2490.84 436.96L418.01 61.45L418.10 61.46L-2489.41 436.96ZM-2520.67 436.96L416.16 61.29L416.25 61.30L-2519.24 436.96ZM-2550.50 436.96L414.32 61.13L414.41 61.14L-2549.07 436.96ZM-2610.17 436.96L410.69 60.81L410.78 60.82L-2608.73 436.96ZM-2640.00 436.96L408.90 60.65L408.99 60.66L-2638.57 436.96ZM-2669.83 436.96L407.12 60.50L407.20 60.50L-2668.40 436.96ZM-2729.49 436.96L403.59 60.19L403.68 60.19L-2728.06 436.96ZM-2759.32 436.96L401.85 60.03L401.93 60.04L-2757.89 436.96ZM-2789.16 436.96L400.12 59.88L400.20 59.89L-2787.72 436.96ZM-2848.82 436.96L396.69 59.58L396.77 59.59L-2847.39 436.96ZM-2878.65 436.96L395.00 59.43L395.08 59.44L-2877.22 436.96ZM-2908.48 436.96L393.32 59.28L393.40 59.29L-2907.05 436.96ZM-2887.06 427.99L-2882.38 427.31L389.99 58.99L390.07 59.00ZM-2792.63 414.18L-2788.26 413.54L388.34 58.85L388.42 58.85ZM-2704.35 401.27L-2700.25 400.68L386.70 58.70L386.78 58.71ZM-2543.97 377.82L-2540.36 377.29L383.47 58.42L383.54 58.42ZM-2470.92 367.14L-2467.52 366.64L381.87 58.28L381.94 58.28ZM-2402.07 357.07L-2398.87 356.60L380.27 58.14L380.35 58.14ZM-2275.63 338.58L-2272.76 338.16L377.13 57.86L377.20 57.87ZM-2217.44 330.07L-2214.72 329.67L375.57 57.72L375.64 57.73ZM-2162.25 322.00L-2159.67 321.62L374.02 57.59L374.09 57.59ZM-2060.01 307.05L-2057.68 306.71L370.95 57.32L371.03 57.32ZM-2012.56 300.11L-2010.34 299.79L369.44 57.18L369.51 57.19ZM-1967.34 293.50L-1965.22 293.19L367.93 57.05L368.00 57.06ZM-1882.96 281.16L-1881.03 280.88L364.95 56.79L365.02 56.80ZM-1843.54 275.39L-1841.69 275.12L363.47 56.66L363.54 56.67ZM-1805.81 269.88L-1804.04 269.62L362.00 56.53L362.07 56.54ZM-1734.99 259.52L-1733.36 259.28L359.10 56.27L359.17 56.28ZM-1701.71 254.65L-1700.15 254.42L357.66 56.15L357.73 56.15ZM-1669.75 249.98L-1668.25 249.76L356.23 56.02L356.30 56.03ZM-1609.47 241.16L-1608.08 240.96L353.40 55.77L353.47 55.78ZM-1581.01 237.00L-1579.67 236.81L352.00 55.65L352.07 55.66ZM-1553.59 232.99L-1552.30 232.80L350.61 55.53L350.67 55.53ZM-1501.65 225.40L-1500.45 225.22L347.85 55.29L347.92 55.29ZM-1477.04 221.80L-1475.88 221.63L346.48 55.17L346.55 55.17ZM-1453.26 218.32L-1452.13 218.16L345.13 55.05L345.19 55.05ZM-1408.04 211.71L-1407.00 211.56L342.44 54.81L342.50 54.82ZM-1386.54 208.56L-1385.52 208.42L341.11 54.69L341.17 54.70ZM-1365.72 205.52L-1364.73 205.38L339.78 54.58L339.85 54.58Z" fill="#8d99a6" fill-opacity="0.06"/>
<path d="M-2948.4 437.0L-1345.1 202.5M3625.4 437.0L2022.1 202.5M-2829.1 437.0L-1220.9 191.6M3506.1 437.0L1897.9 191.6M-2590.4 437.0L-1011.9 173.2M3267.4 437.0L1688.9 173.2M-2471.1 437.0L-923.2 165.4M3148.1 437.0L1600.2 165.4M-2351.8 437.0L-842.9 158.3M3028.8 437.0L1519.9 158.3M-2232.4 437.0L-769.9 151.9M2909.4 437.0L1446.9 151.9M-2113.1 437.0L-703.3 146.1M2790.1 437.0L1380.3 146.1M-1993.8 437.0L-642.3 140.7M2670.8 437.0L1319.3 140.7M-1874.4 437.0L-586.1 135.8M2551.4 437.0L1263.1 135.8M-1755.1 437.0L-534.3 131.2M2432.1 437.0L1211.3 131.2M-1635.8 437.0L-486.3 127.0M2312.8 437.0L1163.3 127.0M-1397.1 437.0L-400.4 119.4M2074.1 437.0L1077.4 119.4M-1277.8 437.0L-361.7 116.0M1954.8 437.0L1038.7 116.0M-1158.5 437.0L-325.5 112.8M1835.5 437.0L1002.5 112.8M-1039.2 437.0L-291.6 109.9M1716.2 437.0L968.6 109.9M-919.8 437.0L-259.7 107.1M1596.8 437.0L936.7 107.1M-800.5 437.0L-229.7 104.4M1477.5 437.0L906.7 104.4M-681.2 437.0L-201.5 101.9M1358.2 437.0L878.5 101.9M-561.9 437.0L-174.8 99.6M1238.9 437.0L851.8 99.6M-442.5 437.0L-149.5 97.4M1119.5 437.0L826.5 97.4M-203.9 437.0L-102.9 93.3M880.9 437.0L779.9 93.3M-84.5 437.0L-81.4 91.4M761.5 437.0L758.4 91.4M34.8 437.0L-60.9 89.6M642.2 437.0L737.9 89.6M154.1 437.0L-41.4 87.9M522.9 437.0L718.4 87.9M273.4 437.0L-22.7 86.2M403.6 437.0L699.7 86.2M392.8 437.0L-5.0 84.7M284.2 437.0L682.0 84.7M512.1 437.0L12.0 83.2M164.9 437.0L665.0 83.2M631.4 437.0L28.2 81.7M45.6 437.0L648.8 81.7M750.7 437.0L43.8 80.4M-73.7 437.0L633.2 80.4M989.4 437.0L72.9 77.8M-312.4 437.0L604.1 77.8M1108.7 437.0L86.7 76.6M-431.7 437.0L590.3 76.6M1228.1 437.0L99.8 75.4M-551.1 437.0L577.2 75.4M1347.4 437.0L112.5 74.3M-670.4 437.0L564.5 74.3M1466.7 437.0L124.7 73.3M-789.7 437.0L552.3 73.3M1586.0 437.0L136.4 72.2M-909.0 437.0L540.6 72.2M1705.4 437.0L147.7 71.2M-1028.4 437.0L529.3 71.2M1824.7 437.0L158.6 70.3M-1147.7 437.0L518.4 70.3M1944.0 437.0L169.2 69.4M-1267.0 437.0L507.8 69.4M2182.7 437.0L189.1 67.6M-1505.7 437.0L487.9 67.6M2302.0 437.0L198.6 66.8M-1625.0 437.0L478.4 66.8M2421.3 437.0L207.8 66.0M-1744.3 437.0L469.2 66.0M2540.7 437.0L216.7 65.2M-1863.7 437.0L460.3 65.2M2660.0 437.0L225.3 64.4M-1983.0 437.0L451.7 64.4M2779.3 437.0L233.6 63.7M-2102.3 437.0L443.4 63.7M2898.6 437.0L241.7 63.0M-2221.6 437.0L435.3 63.0M3018.0 437.0L249.5 62.3M-2341.0 437.0L427.5 62.3M3137.3 437.0L257.1 61.6M-2460.3 437.0L419.9 61.6M3375.9 437.0L271.6 60.3M-2698.9 437.0L405.4 60.3M3495.3 437.0L278.6 59.7M-2818.3 437.0L398.4 59.7M3614.6 437.0L285.3 59.1M-2937.6 437.0L391.7 59.1M3296.7 388.9L291.9 58.6M-2619.7 388.9L385.1 58.6M3012.6 347.3L298.3 58.0M-2335.6 347.3L378.7 58.0M2785.6 314.2L304.5 57.5M-2108.6 314.2L372.5 57.5M2600.2 287.0L310.5 56.9M-1923.2 287.0L366.5 56.9M2445.8 264.5L316.4 56.4M-1768.8 264.5L360.6 56.4M2315.3 245.4L322.2 55.9M-1638.3 245.4L354.8 55.9M2106.7 214.9L333.2 54.9M-1429.7 214.9L343.8 54.9M2022.1 202.5L338.5 54.5M-1345.1 202.5L338.5 54.5" stroke="url(#lg)" stroke-width="1" fill="none"/>
<path d="M-2709.7 437.0L-1110.6 181.9M3386.7 437.0L1787.6 181.9M-1516.5 437.0L-441.8 123.1M2193.5 437.0L1118.8 123.1M-323.2 437.0L-125.6 95.3M1000.2 437.0L802.6 95.3M870.1 437.0L58.7 79.1M-193.1 437.0L618.3 79.1M2063.3 437.0L179.3 68.5M-1386.3 437.0L497.7 68.5M3256.6 437.0L264.5 61.0M-2579.6 437.0L412.5 61.0M2203.5 229.0L327.7 55.4M-1526.5 229.0L349.3 55.4" stroke="#a6adb4" stroke-opacity="0.45" stroke-width="1" fill="none"/>
</g>
<polygon points="338.5,54.5 2022.1,202.5 3625.4,437.0 -2948.4,437.0 -1345.1,202.5" fill="none" stroke="#ff7200" stroke-width="2.6" transform="translate(0,-0.8)"/>
</svg>
<svg class="a" style="left:291px;top:88px" width="677" height="404" viewBox="291 88 677 404">
 <defs><filter id="sh" x="-20%" y="-20%" width="140%" height="140%"><feDropShadow dx="0" dy="0" stdDeviation="0.7" flood-color="#000" flood-opacity="0.8"/></filter></defs>
 <!-- sun -->
 <g filter="url(#sh)" fill="#fcf0d6">
  <circle cx="629.8" cy="175" r="7.4"/>
  <g stroke="#fcf0d6" stroke-linecap="butt">
   <path d="M629.8 155.5V165.2M629.8 184.8V194.5M610.5 175H620.2M639.4 175H649" stroke-width="2.3"/>
   <path d="M617.2 162.4L622 167.2M637.6 182.8L642.4 187.6M617.2 187.6L622 182.8M637.6 167.2L642.4 162.4" stroke-width="2.3"/>
   <path d="M625.6 162.8L626.9 166.4M634 162.8L632.7 166.4M625.6 187.2L626.9 183.6M634 187.2L632.7 183.6M617.6 170.8L621.2 172.1M617.6 179.2L621.2 177.9M642 170.8L638.4 172.1M642 179.2L638.4 177.9" stroke-width="2"/>
  </g>
 </g>
 <!-- camera -->
 <g filter="url(#sh)" fill="#fbfbfb">
  <circle cx="458.8" cy="196.5" r="3.4"/><circle cx="465.4" cy="191.6" r="3.6"/>
  <rect x="459.5" y="196.5" width="11.5" height="6.2"/><path d="M470.5 199L474.5 196.8V201.5Z"/>
 </g>
 <!-- transform gizmo -->
 <path d="M629.5 290L629.5 271.5L614.3 277.3L614.3 296.2Z" fill="#3b5ac8" fill-opacity="0.45" stroke="#3f7cff" stroke-width="1"/>
 <path d="M629.5 290L629.5 271.5L644.4 277.3L644.4 296.2Z" fill="#b84028" fill-opacity="0.3" stroke="#e8552e" stroke-width="1"/>
 <path d="M629.5 290L614.3 296.2L629.5 303.8L644.4 296.2Z" fill="#5db53a" fill-opacity="0.45" stroke="#8ce03c" stroke-width="1"/>
 <path d="M629.5 290V219" stroke="#8ce03c" stroke-width="1"/>
 <path d="M614.3 296.5L575 315.5" stroke="#e8552e" stroke-width="1"/>
 <path d="M644.4 296.5L684 315.5" stroke="#3f7cff" stroke-width="1"/>
 <path d="M629.6 199L622.8 220.5Q629.6 223.5 636.4 220.5Z" fill="#88e030"/>
 <path d="M629.6 199L629.6 222.5Q633 222.3 636.4 220.5Z" fill="#6cc020"/>
 <path d="M554 324L572.2 309.8Q578.5 316 577 322Z" fill="#ff4a10"/>
 <path d="M554 324L577 322Q574 325 566 326Z" fill="#b02a00"/>
 <path d="M705.5 324L687.3 309.8Q681 316 682.5 322Z" fill="#2f6ff5"/>
 <path d="M705.5 324L682.5 322Q686 325.5 694 326Z" fill="#1d3d9a"/>
 <!-- orientation gizmo -->
 <path d="M917 130L909 109.5Q917 107 925 109.5Z" fill="#7ed02a"/>
 <path d="M917 130L917 108.6Q921 108.6 925 109.5Z" fill="#5aa81a"/>
 <path d="M909 131L917 126.5L925 131L925 145L917 149.5L909 145Z" fill="#bdbdbd"/>
 <path d="M909 131L917 126.5L925 131L917 135.5Z" fill="#a9a9ad"/>
 <path d="M887.5 142.5L909.7 142.5L895.3 158Z" fill="#c0360c"/>
 <path d="M909.7 142.5L895.3 158L900 145Z" fill="#2a0c00"/>
 <path d="M924.3 142.5L946.8 142.5L939.5 158Z" fill="#2c55e0"/>
 <path d="M924.3 142.5L939.5 158L936 146Z" fill="#0a1c70"/>
 <path d="M908.5 136L897.5 127.5Q895 132 897.5 136Z" fill="#f4f4f4"/>
 <path d="M925.5 136L936.5 127.5Q939 132 936.5 136Z" fill="#f4f4f4"/>
 <path d="M917 149L912.5 162.5Q917 165 921.5 162.5Z" fill="#f4f4f4"/>
 <text x="917" y="102" font-family="Liberation Sans" font-size="11" font-weight="bold" fill="#f4f4f4" text-anchor="middle">y</text>
 <text x="883" y="157.5" font-family="Liberation Sans" font-size="11" font-weight="bold" fill="#f4f4f4" text-anchor="middle">x</text>
 <text x="951.5" y="157.5" font-family="Liberation Sans" font-size="11" font-weight="bold" fill="#f4f4f4" text-anchor="middle">z</text>
 <path d="M950.2 104V102.5A2.3 2.3 0 0 1 954.8 102.5" fill="none" stroke="#c5c5c5" stroke-width="1"/><rect x="948.8" y="104" width="7.2" height="4.8" fill="#c5c5c5"/>
 <path d="M903.5 184.5L894.5 189L903.5 193.5M894.5 189H903" fill="none" stroke="#d6d6d6" stroke-width="0.9"/>
 <text x="907.5" y="193.5" font-family="Liberation Sans" font-size="11" fill="#d6d6d6">Persp</text>
 <!-- orange border right/bottom/left -->
 <path d="M292 170V491H967V170" fill="none" stroke="#ff7200" stroke-width="2"/>
</svg>


<!-- INSPECTOR -->
<div class="tab" style="left:972px;top:55px;width:99px;height:16px"></div>
<svg class="a" style="left:980px;top:58px" width="9" height="9" viewBox="0 0 9 9"><circle cx="4.5" cy="4.5" r="4.5" fill="#222"/><rect x="3.8" y="3.6" width="1.5" height="3.6" fill="#fff"/><rect x="3.8" y="1.6" width="1.5" height="1.3" fill="#fff"/></svg>
<div class="t ls" style="left:995px;top:56px">Inspector</div>
<div class="t ls" style="left:1078px;top:56px;color:#222">Services</div>
<svg class="a" style="left:1219px;top:60px" width="8" height="9" viewBox="0 0 8 9"><path d="M1.5 4.5 V2.8 A2.3 2.3 0 0 1 6.1 2.8" fill="none" stroke="#444" stroke-width="1.1"/><rect x="0" y="4.5" width="7" height="4.5" fill="#444"/></svg>
<svg class="a" style="left:1231px;top:63px" width="16" height="7" viewBox="0 0 16 7"><path d="M1 2.5 L6 2.5 L3.5 5Z" fill="#3a3a3a"/><path d="M7 1.5h8M7 3.5h8M7 5.5h8" stroke="#333" stroke-width="1"/></svg>
<div class="a" style="left:970px;top:70px;width:281px;height:754px;background:#c2c2c2;border-left:1px solid #8c8c8c;border-top:1px solid #8a8a8a;border-bottom:1px solid #8c8c8c"></div>
<div class="a" style="left:971px;top:71px;width:280px;height:67px;background:#d8d8d8;border-top:1px solid #eeeeee;border-bottom:1px solid #7f7f7f"></div>
<div class="a" style="left:971px;top:139px;width:280px;height:1px;background:#e0e0e0"></div>
<!-- cube -->
<svg class="a" style="left:978px;top:78px" width="23" height="22" viewBox="0 0 23 22">
 <path d="M2 5.5L11.5 1.5L21 5.5L11.5 9.5Z" fill="#8fd2f5"/>
 <path d="M2 5.5L11.5 9.5V20L2 16Z" fill="#3a9ad8"/>
 <path d="M21 5.5L11.5 9.5V20L21 16Z" fill="#2778b8"/>
 <path d="M1.5 17H9L5.2 21Z" fill="#222"/>
</svg>
<div class="a chk on" style="left:1012px;top:80px"></div>
<div class="fld" style="left:1030px;top:79px;width:149px;height:15px"></div>
<div class="t" style="left:1034px;top:79px;letter-spacing:0.69px">FloorPrototype64x01x64</div>
<div class="a chk" style="left:1185px;top:80px"></div>
<div class="t" style="left:1201px;top:79px;letter-spacing:0.2px">Static</div>
<svg class="a" style="left:1235px;top:83px" width="10" height="5" viewBox="0 0 10 5"><path d="M0 0H9.5L4.75 5Z" fill="#222"/></svg>
<div class="t" style="left:1007px;top:99px;letter-spacing:0.3px">Tag</div>
<div class="btn" style="left:1030px;top:99px;width:92px;height:14px;border-radius:3px"></div>
<div class="t xs" style="left:1036px;top:100px">Untagged</div>
<svg class="a ud" style="left:1113px;top:102px" width="5" height="9" viewBox="0 0 5 9"><path d="M0 3.5H5L2.5 0Z M0 5.5H5L2.5 9Z" fill="#222"/></svg>
<div class="t" style="left:1129px;top:99px;letter-spacing:0.3px">Layer</div>
<div class="btn" style="left:1160px;top:99px;width:84px;height:14px;border-radius:3px"></div>
<div class="t xs" style="left:1166px;top:100px">Default</div>
<svg class="a" style="left:1235px;top:102px" width="5" height="9" viewBox="0 0 5 9"><path d="M0 3.5H5L2.5 0Z M0 5.5H5L2.5 9Z" fill="#222"/></svg>
<div class="t" style="left:990px;top:118px;letter-spacing:0.3px">Prefab</div>
<div class="btn" style="left:1030px;top:118px;width:214px;height:14px;border-radius:3px">
 <div class="a" style="left:70px;top:0;width:1px;height:12px;background:#8a8a8a"></div>
 <div class="a" style="left:143px;top:0;width:1px;height:12px;background:#8a8a8a"></div>
</div>
<div class="t xs" style="left:1030px;top:119px;width:71px;text-align:center">Select</div>
<div class="t xs" style="left:1101px;top:119px;width:73px;text-align:center">Revert</div>
<div class="t xs" style="left:1174px;top:119px;width:70px;text-align:center">Apply</div>

<!-- Transform -->
<svg class="a tri" style="left:976px;top:146px" width="9" height="8" viewBox="0 0 9 8"><path d="M0 0H9L4.5 8Z" fill="#7a7a7a"/></svg>
<svg class="a" style="left:988px;top:142px" width="15" height="14" viewBox="0 0 15 14"><path d="M7 1V8" stroke="#4ad33a" stroke-width="2"/><path d="M7 8L1.5 11.5" stroke="#2a8ae6" stroke-width="2"/><path d="M7 8L13 11.5" stroke="#e2261e" stroke-width="2"/></svg>
<div class="t b" style="left:1021px;top:143px;letter-spacing:0.5px">Transform</div>
<svg class="a help" style="left:1217px;top:143px" width="14" height="14" viewBox="0 0 14 14"><rect x="1" y="0.5" width="12.5" height="13" rx="1.5" fill="#2f4f88"/><rect x="2.5" y="1.5" width="9.5" height="10.3" rx="1" fill="#6f93cc"/><text x="7" y="10.5" font-family="Liberation Sans" font-size="9" font-weight="bold" fill="#fff" text-anchor="middle">?</text></svg>
<svg class="a gear" style="left:1236px;top:143px" width="13" height="13" viewBox="0 0 13 13"><g transform="translate(5.5 5.5)"><path d="M-1.2 -5.5H1.2L1.5 -3.8L2.9 -3.2L4.3 -4.3L5.9 -2.7L4.8 -1.3L5.3 0L7 0.3V2.6" fill="none"/></g><circle cx="5.5" cy="5.5" r="3.8" fill="#222"/><path d="M5.5 0.3V10.7M0.3 5.5H10.7M1.8 1.8L9.2 9.2M1.8 9.2L9.2 1.8" stroke="#222" stroke-width="2"/><circle cx="5.5" cy="5.5" r="1.6" fill="#c2c2c2"/><path d="M9 10.5H13L11 12.8Z" fill="#222"/></svg>
<div class="t b" style="left:987px;top:159px;letter-spacing:0.25px">Position</div>
<div class="t b" style="left:987px;top:177px;letter-spacing:0.25px">Rotation</div>
<div class="t" style="left:987px;top:195px">Scale</div>
<div class="t b" style="left:1055px;top:159px">X</div><div class="fld" style="left:1066px;top:158px;width:49px;height:16px"></div><div class="t" style="left:1069px;top:159px">0</div>
<div class="t b" style="left:1120px;top:159px">Y</div><div class="fld" style="left:1131px;top:158px;width:50px;height:16px"></div><div class="t" style="left:1134px;top:159px">0</div>
<div class="t b" style="left:1187px;top:159px">Z</div><div class="fld" style="left:1197px;top:158px;width:50px;height:16px"></div><div class="t" style="left:1200px;top:159px">0</div>
<div class="t b" style="left:1055px;top:177px">X</div><div class="fld" style="left:1066px;top:176px;width:49px;height:16px"></div><div class="t" style="left:1069px;top:177px">0</div>
<div class="t b" style="left:1120px;top:177px">Y</div><div class="fld" style="left:1131px;top:176px;width:50px;height:16px"></div><div class="t" style="left:1134px;top:177px">0</div>
<div class="t b" style="left:1187px;top:177px">Z</div><div class="fld" style="left:1197px;top:176px;width:50px;height:16px"></div><div class="t" style="left:1200px;top:177px">0</div>
<div class="t" style="left:1055px;top:195px">X</div><div class="fld" style="left:1066px;top:194px;width:49px;height:16px"></div><div class="t" style="left:1069px;top:195px">1</div>
<div class="t" style="left:1120px;top:195px">Y</div><div class="fld" style="left:1131px;top:194px;width:50px;height:16px"></div><div class="t" style="left:1134px;top:195px">1</div>
<div class="t" style="left:1187px;top:195px">Z</div><div class="fld" style="left:1197px;top:194px;width:50px;height:16px"></div><div class="t" style="left:1200px;top:195px">1</div>
<div class="a div" style="left:971px;top:214px;width:280px;height:2px;border-top:1px solid #9a9a9a;border-bottom:1px solid #d0d0d0"></div>

<!-- Mesh Filter -->
<svg class="a" style="left:976px;top:221px" width="9" height="8" viewBox="0 0 9 8"><path d="M0 0H9L4.5 8Z" fill="#7a7a7a"/></svg>
<svg class="a" style="left:989px;top:218px" width="13" height="14" viewBox="0 0 13 14"><rect x="0.5" y="0.5" width="12" height="13" rx="2" fill="#b9dcf5" stroke="#5aa0d8"/><path d="M4.5 1V13M8.5 1V13M1 5H12M1 9H12" stroke="#5aa0d8" stroke-width="1"/></svg>
<div class="a" style="left:1018px;top:217px;width:193px;height:16px;overflow:hidden"><div class="t b" style="left:3px;top:1px;letter-spacing:0.55px">Floor Prototype 64x01x64 (Mesh Filter)</div></div>
<svg class="a" style="left:1217px;top:218px" width="14" height="14" viewBox="0 0 14 14"><rect x="1" y="0.5" width="12.5" height="13" rx="1.5" fill="#2f4f88"/><rect x="2.5" y="1.5" width="9.5" height="10.3" rx="1" fill="#6f93cc"/><text x="7" y="10.5" font-family="Liberation Sans" font-size="9" font-weight="bold" fill="#fff" text-anchor="middle">?</text></svg>
<svg class="a" style="left:1236px;top:218px" width="13" height="13" viewBox="0 0 13 13"><circle cx="5.5" cy="5.5" r="3.8" fill="#222"/><path d="M5.5 0.3V10.7M0.3 5.5H10.7M1.8 1.8L9.2 9.2M1.8 9.2L9.2 1.8" stroke="#222" stroke-width="2"/><circle cx="5.5" cy="5.5" r="1.6" fill="#c2c2c2"/><path d="M9 10.5H13L11 12.8Z" fill="#222"/></svg>
<div class="t" style="left:987px;top:234px">Mesh</div>
<div class="fld" style="left:1105px;top:233px;width:124px;height:16px;overflow:hidden">
 <svg class="a" style="left:2px;top:2px" width="9" height="10" viewBox="0 0 9 10"><rect x="0" y="0" width="9" height="10" fill="#8fa2b5"/><path d="M3 0V10M6 0V10M0 3.3H9M0 6.6H9" stroke="#3d5670" stroke-width="0.8"/></svg>
 <div class="t" style="left:12px;top:0px;letter-spacing:0.69px">FloorPrototype64x01x64</div>
</div>
<svg class="a" style="left:1236px;top:236px" width="9" height="9" viewBox="0 0 9 9"><circle cx="4.5" cy="4.5" r="3.8" fill="none" stroke="#222" stroke-width="1"/><circle cx="4.5" cy="4.5" r="1.3" fill="#222"/></svg>
<div class="a" style="left:971px;top:253px;width:280px;height:2px;border-top:1px solid #9a9a9a;border-bottom:1px solid #d0d0d0"></div>

<!-- Mesh Renderer -->
<svg class="a" style="left:976px;top:259px" width="9" height="8" viewBox="0 0 9 8"><path d="M0 0H9L4.5 8Z" fill="#7a7a7a"/></svg>
<svg class="a" style="left:988px;top:256px" width="16" height="16" viewBox="0 0 16 16"><rect x="0.5" y="0.5" width="11" height="12" rx="2" fill="#b9dcf5" stroke="#5aa0d8"/><path d="M4 1V12M8 1V12M1 4.5H11M1 8.5H11" stroke="#5aa0d8" stroke-width="1"/><ellipse cx="11" cy="12.5" rx="4.5" ry="2.6" fill="#fff" stroke="#555" stroke-width="0.8"/><circle cx="11" cy="12.5" r="1.2" fill="#333"/></svg>
<div class="a chk on" style="left:1006px;top:258px"></div>
<div class="t b" style="left:1021px;top:257px;letter-spacing:0.45px">Mesh Renderer</div>
<svg class="a" style="left:1217px;top:256px" width="14" height="14" viewBox="0 0 14 14"><rect x="1" y="0.5" width="12.5" height="13" rx="1.5" fill="#2f4f88"/><rect x="2.5" y="1.5" width="9.5" height="10.3" rx="1" fill="#6f93cc"/><text x="7" y="10.5" font-family="Liberation Sans" font-size="9" font-weight="bold" fill="#fff" text-anchor="middle">?</text></svg>
<svg class="a" style="left:1236px;top:256px" width="13" height="13" viewBox="0 0 13 13"><circle cx="5.5" cy="5.5" r="3.8" fill="#222"/><path d="M5.5 0.3V10.7M0.3 5.5H10.7M1.8 1.8L9.2 9.2M1.8 9.2L9.2 1.8" stroke="#222" stroke-width="2"/><circle cx="5.5" cy="5.5" r="1.6" fill="#c2c2c2"/><path d="M9 10.5H13L11 12.8Z" fill="#222"/></svg>
<svg class="a" style="left:977px;top:276px" width="8" height="9" viewBox="0 0 8 9"><path d="M0 0V9L7.5 4.5Z" fill="#7a7a7a"/></svg>
<div class="t" style="left:987px;top:273px;letter-spacing:0.3px">Lighting</div>
<svg class="a" style="left:977px;top:293px" width="8" height="9" viewBox="0 0 8 9"><path d="M0 0V9L7.5 4.5Z" fill="#7a7a7a"/></svg>
<div class="t" style="left:987px;top:291px;letter-spacing:0.2px">Materials</div>
<div class="a" style="left:971px;top:310px;width:280px;height:2px;border-top:1px solid #9a9a9a;border-bottom:1px solid #d0d0d0"></div>

<!-- Box Collider -->
<svg class="a" style="left:976px;top:317px" width="9" height="8" viewBox="0 0 9 8"><path d="M0 0H9L4.5 8Z" fill="#7a7a7a"/></svg>
<svg class="a" style="left:988px;top:313px" width="15" height="16" viewBox="0 0 15 16"><path d="M1 4L7.5 1L14 4L7.5 7Z" fill="#b6e05a"/><path d="M1 4L7.5 7V15L1 12Z" fill="#6cae22"/><path d="M14 4L7.5 7V15L14 12Z" fill="#4c8c12"/></svg>
<div class="a chk on" style="left:1006px;top:314px"></div>
<div class="t b" style="left:1021px;top:314px;letter-spacing:0.45px">Box Collider</div>
<svg class="a" style="left:1217px;top:313px" width="14" height="14" viewBox="0 0 14 14"><rect x="1" y="0.5" width="12.5" height="13" rx="1.5" fill="#2f4f88"/><rect x="2.5" y="1.5" width="9.5" height="10.3" rx="1" fill="#6f93cc"/><text x="7" y="10.5" font-family="Liberation Sans" font-size="9" font-weight="bold" fill="#fff" text-anchor="middle">?</text></svg>
<svg class="a" style="left:1236px;top:313px" width="13" height="13" viewBox="0 0 13 13"><circle cx="5.5" cy="5.5" r="3.8" fill="#222"/><path d="M5.5 0.3V10.7M0.3 5.5H10.7M1.8 1.8L9.2 9.2M1.8 9.2L9.2 1.8" stroke="#222" stroke-width="2"/><circle cx="5.5" cy="5.5" r="1.6" fill="#c2c2c2"/><path d="M9 10.5H13L11 12.8Z" fill="#222"/></svg>
<div class="btn" style="left:1105px;top:329px;width:33px;height:22px;border-radius:3px"></div>
<svg class="a" style="left:1113px;top:333px" width="17" height="14" viewBox="0 0 17 14"><rect x="1" y="9" width="3" height="3" fill="none" stroke="#111" stroke-width="1"/><rect x="13" y="9" width="3" height="3" fill="none" stroke="#111" stroke-width="1"/><rect x="7" y="1" width="3" height="3" fill="none" stroke="#111" stroke-width="1"/><path d="M3 9L7.5 4M9.5 4L14 9" stroke="#111" stroke-width="1"/></svg>
<div class="t" style="left:1145px;top:333px;letter-spacing:0.4px">Edit Collider</div>
<div class="t" style="left:987px;top:355px;letter-spacing:0.3px">Is Trigger</div>
<div class="a chk" style="left:1106px;top:356px"></div>
<div class="t" style="left:987px;top:373px;letter-spacing:0.2px">Material</div>
<div class="fld" style="left:1105px;top:372px;width:124px;height:16px"></div>
<div class="t" style="left:1108px;top:373px;letter-spacing:0.2px">None (Physic Material)</div>
<svg class="a" style="left:1236px;top:375px" width="9" height="9" viewBox="0 0 9 9"><circle cx="4.5" cy="4.5" r="3.8" fill="none" stroke="#222" stroke-width="1"/><circle cx="4.5" cy="4.5" r="1.3" fill="#222"/></svg>
<div class="t" style="left:987px;top:391px;letter-spacing:0.3px">Center</div>
<div class="t" style="left:1002px;top:407px">X</div><div class="fld" style="left:1013px;top:406px;width:68px;height:16px"></div><div class="t" style="left:1016px;top:407px">0</div>
<div class="t" style="left:1085px;top:407px">Y</div><div class="fld" style="left:1096px;top:406px;width:68px;height:16px;overflow:hidden"><div class="t" style="left:2px;top:0;letter-spacing:0.3px">-0.5000052</div></div>
<div class="t" style="left:1167px;top:407px">Z</div><div class="fld" style="left:1179px;top:406px;width:68px;height:16px"></div><div class="t" style="left:1182px;top:407px">0</div>
<div class="t" style="left:987px;top:425px;letter-spacing:0.3px">Size</div>
<div class="t" style="left:1002px;top:441px">X</div><div class="fld" style="left:1013px;top:440px;width:68px;height:16px"></div><div class="t" style="left:1016px;top:441px;letter-spacing:0.5px">64</div>
<div class="t" style="left:1085px;top:441px">Y</div><div class="fld" style="left:1096px;top:440px;width:68px;height:16px"></div><div class="t" style="left:1099px;top:441px;letter-spacing:0.5px">1.00001</div>
<div class="t" style="left:1167px;top:441px">Z</div><div class="fld" style="left:1179px;top:440px;width:68px;height:16px"></div><div class="t" style="left:1182px;top:441px;letter-spacing:0.5px">64</div>
<div class="a" style="left:971px;top:464px;width:280px;height:2px;background:#8e8e8e;border-bottom:1px solid #e0e0e0"></div>

<!-- Material -->
<div class="a" style="left:971px;top:466px;width:280px;height:43px;background:#d6d6d6"></div>
<div class="a" style="left:987px;top:470px;width:32px;height:32px;background:#fff"></div>
<svg class="a" style="left:987px;top:470px" width="32" height="32" viewBox="0 0 32 32"><defs><radialGradient id="sph" cx="0.4" cy="0.35" r="0.7"><stop offset="0" stop-color="#2b3440"/><stop offset="1" stop-color="#0c0f14"/></radialGradient></defs><circle cx="16" cy="16" r="14.5" fill="url(#sph)"/><path d="M16 1.5V30.5" stroke="#050608" stroke-width="1"/></svg>
<svg class="a" style="left:977px;top:492px" width="8" height="9" viewBox="0 0 8 9"><path d="M0 0V9L7.5 4.5Z" fill="#7a7a7a"/></svg>
<div class="t" style="left:1027px;top:470px;letter-spacing:0.4px">NavyGrid</div>
<svg class="a" style="left:1217px;top:470px" width="14" height="14" viewBox="0 0 14 14"><rect x="1" y="0.5" width="12.5" height="13" rx="1.5" fill="#2f4f88"/><rect x="2.5" y="1.5" width="9.5" height="10.3" rx="1" fill="#6f93cc"/><text x="7" y="10.5" font-family="Liberation Sans" font-size="9" font-weight="bold" fill="#fff" text-anchor="middle">?</text></svg>
<svg class="a" style="left:1236px;top:471px" width="13" height="13" viewBox="0 0 13 13"><circle cx="5.5" cy="5.5" r="3.8" fill="#222"/><path d="M5.5 0.3V10.7M0.3 5.5H10.7M1.8 1.8L9.2 9.2M1.8 9.2L9.2 1.8" stroke="#222" stroke-width="2"/><circle cx="5.5" cy="5.5" r="1.6" fill="#d6d6d6"/><path d="M9 10.5H13L11 12.8Z" fill="#222"/></svg>
<div class="t" style="left:1027px;top:489px;letter-spacing:0.4px">Shader</div>
<div class="btn" style="left:1075px;top:489px;width:169px;height:15px;border-radius:3px"></div>
<div class="t xs" style="left:1081px;top:490px">Standard (Specular setup)</div>
<svg class="a" style="left:1233px;top:494px" width="6" height="5" viewBox="0 0 6 5"><path d="M0 0H6L3 4Z" fill="#222"/></svg>
<div class="a" style="left:971px;top:508px;width:280px;height:5px;border-top:1px solid #8a8a8a;border-bottom:1px solid #8a8a8a;background:#d0d0d0"></div>
<div class="btn" style="left:994px;top:524px;width:230px;height:23px;border-radius:4px"></div>
<div class="t" style="left:994px;top:528px;width:230px;text-align:center;font-size:12px;letter-spacing:0.4px">Add Component</div>

<!-- PROJECT -->
<div class="tab" style="left:0;top:499px;width:98px;height:16px"></div>
<svg class="a" style="left:8px;top:502px" width="12" height="10" viewBox="0 0 12 10"><path d="M0.5 1.5Q0.5 0.5 1.5 0.5H4.5L5.5 1.8H10.5Q11.5 1.8 11.5 2.8V8.5Q11.5 9.5 10.5 9.5H1.5Q0.5 9.5 0.5 8.5Z" fill="#8a8a8a" stroke="#444" stroke-width="1"/></svg>
<div class="t ls" style="left:23px;top:500px">Project</div>
<svg class="a" style="left:257px;top:504px" width="8" height="9" viewBox="0 0 8 9"><path d="M1.5 4.5 V2.8 A2.3 2.3 0 0 1 6.1 2.8" fill="none" stroke="#444" stroke-width="1.1"/><rect x="0" y="4.5" width="7" height="4.5" fill="#444"/></svg>
<svg class="a" style="left:269px;top:507px" width="16" height="7" viewBox="0 0 16 7"><path d="M1 2.5 L6 2.5 L3.5 5Z" fill="#3a3a3a"/><path d="M7 1.5h8M7 3.5h8M7 5.5h8" stroke="#333" stroke-width="1"/></svg>
<div class="a" style="left:0;top:514px;width:288px;height:310px;background:#c2c2c2;border-right:1px solid #8c8c8c;border-bottom:1px solid #8c8c8c"></div>
<div class="ptb" style="left:0;top:515px;width:287px;height:18px"></div>
<div class="a" style="left:6px;top:516px;width:1px;height:16px;background:#a8a8a8"></div>
<div class="a" style="left:52px;top:516px;width:1px;height:16px;background:#a8a8a8"></div>
<div class="t" style="left:12px;top:519px;color:#222;font-size:9px;letter-spacing:0.05px">Create</div>
<svg class="a" style="left:44px;top:521px" width="5" height="4" viewBox="0 0 5 4"><path d="M0 0 L5 0 L2.5 3Z" fill="#333"/></svg>
<div class="a srch" style="left:62px;top:517px;width:171px;height:14px"></div>
<svg class="a" style="left:67px;top:519px" width="10" height="10" viewBox="0 0 10 10"><circle cx="3.8" cy="3.8" r="2.8" fill="none" stroke="#555" stroke-width="1"/><path d="M5.8 5.8 L8.5 8.5" stroke="#555" stroke-width="1.2"/></svg>
<div class="a" style="left:237px;top:516px;width:1px;height:16px;background:#a8a8a8"></div>
<svg class="a" style="left:243px;top:518px" width="12" height="11" viewBox="0 0 12 11"><path d="M0 9L3.5 3.5L7 9Z" fill="#555"/><circle cx="7.5" cy="3" r="2.6" fill="#555"/><rect x="6" y="6" width="5" height="5" fill="#555"/></svg>
<div class="a" style="left:259px;top:516px;width:1px;height:16px;background:#a8a8a8"></div>
<svg class="a" style="left:264px;top:518px" width="12" height="12" viewBox="0 0 12 12"><path d="M1 1H6L11.5 6.5L6.5 11.5L1 6Z" fill="#555"/><circle cx="3.5" cy="3.5" r="1" fill="#ddd"/></svg>
<div class="a" style="left:281px;top:516px;width:1px;height:16px;background:#a8a8a8"></div>
<!-- scrollbar -->
<div class="a" style="left:272px;top:533px;width:15px;height:290px;background:linear-gradient(90deg,#b9b9b9,#d6d6d6 40%,#cfcfcf);border-left:1px solid #a9a9a9"></div>
<svg class="a" style="left:275px;top:538px" width="9" height="7" viewBox="0 0 9 7"><path d="M0 7H9L4.5 0Z" fill="#111"/></svg>
<svg class="a" style="left:275px;top:810px" width="9" height="7" viewBox="0 0 9 7"><path d="M0 0H9L4.5 7Z" fill="#111"/></svg>
<div class="a" style="left:273px;top:551px;width:13px;height:254px;border-radius:7px;background:linear-gradient(90deg,#cfcfcf,#f2f2f2 45%,#e6e6e6);border:1px solid #b5b5b5"></div>
<div class="a" style="left:273px;top:587px;width:13px;height:142px;border-radius:7px;background:linear-gradient(90deg,#5e7aa6,#9cb2d2 45%,#7f96bc);border:1px solid #53698e"></div>

<svg class="a" style="left:19px;top:537px" width="8" height="9" viewBox="0 0 8 9"><path d="M0 0V9L7.5 4.5Z" fill="#7a7a7a"/></svg>
<svg class="a" style="left:30px;top:535px" width="15" height="13" viewBox="0 0 15 13"><path d="M1 2.5Q1 1 2.5 1H6L7.2 2.2H12.5Q14 2.2 14 3.7V11Q14 12.5 12.5 12.5H2.5Q1 12.5 1 11Z" fill="#e8e8e8" stroke="#5e6b70" stroke-width="0.8"/><path d="M1 4.5H14V11Q14 12.5 12.5 12.5H2.5Q1 12.5 1 11Z" fill="#6f7d83"/><path d="M1.5 5H13.5" stroke="#b8c4c8" stroke-width="0.8"/></svg>
<div class="t" style="left:48px;top:535px;letter-spacing:0.5px">Editor</div>
<svg class="a" style="left:19px;top:553px" width="8" height="9" viewBox="0 0 8 9"><path d="M0 0V9L7.5 4.5Z" fill="#7a7a7a"/></svg>
<svg class="a" style="left:30px;top:551px" width="15" height="13" viewBox="0 0 15 13"><path d="M1 2.5Q1 1 2.5 1H6L7.2 2.2H12.5Q14 2.2 14 3.7V11Q14 12.5 12.5 12.5H2.5Q1 12.5 1 11Z" fill="#e8e8e8" stroke="#5e6b70" stroke-width="0.8"/><path d="M1 4.5H14V11Q14 12.5 12.5 12.5H2.5Q1 12.5 1 11Z" fill="#6f7d83"/><path d="M1.5 5H13.5" stroke="#b8c4c8" stroke-width="0.8"/></svg>
<div class="t" style="left:48px;top:551px;letter-spacing:0.5px">PhysicsMaterials</div>
<svg class="a" style="left:19px;top:570px" width="9" height="8" viewBox="0 0 9 8"><path d="M0 0H9L4.5 8Z" fill="#7a7a7a"/></svg>
<svg class="a" style="left:30px;top:567px" width="15" height="13" viewBox="0 0 15 13"><path d="M1 2.5Q1 1 2.5 1H6L7.2 2.2H12.5Q14 2.2 14 3.7V11Q14 12.5 12.5 12.5H2.5Q1 12.5 1 11Z" fill="#e8e8e8" stroke="#5e6b70" stroke-width="0.8"/><path d="M1 4.5H14V11Q14 12.5 12.5 12.5H2.5Q1 12.5 1 11Z" fill="#6f7d83"/><path d="M1.5 5H13.5" stroke="#b8c4c8" stroke-width="0.8"/></svg>
<div class="t" style="left:48px;top:567px;letter-spacing:0.5px">Prototyping</div>
<svg class="a" style="left:33px;top:585px" width="8" height="9" viewBox="0 0 8 9"><path d="M0 0V9L7.5 4.5Z" fill="#7a7a7a"/></svg>
<svg class="a" style="left:44px;top:583px" width="15" height="13" viewBox="0 0 15 13"><path d="M1 2.5Q1 1 2.5 1H6L7.2 2.2H12.5Q14 2.2 14 3.7V11Q14 12.5 12.5 12.5H2.5Q1 12.5 1 11Z" fill="#e8e8e8" stroke="#5e6b70" stroke-width="0.8"/><path d="M1 4.5H14V11Q14 12.5 12.5 12.5H2.5Q1 12.5 1 11Z" fill="#6f7d83"/><path d="M1.5 5H13.5" stroke="#b8c4c8" stroke-width="0.8"/></svg>
<div class="t" style="left:62px;top:583px;letter-spacing:0.5px">Materials</div>
<svg class="a" style="left:33px;top:601px" width="8" height="9" viewBox="0 0 8 9"><path d="M0 0V9L7.5 4.5Z" fill="#7a7a7a"/></svg>
<svg class="a" style="left:44px;top:599px" width="15" height="13" viewBox="0 0 15 13"><path d="M1 2.5Q1 1 2.5 1H6L7.2 2.2H12.5Q14 2.2 14 3.7V11Q14 12.5 12.5 12.5H2.5Q1 12.5 1 11Z" fill="#e8e8e8" stroke="#5e6b70" stroke-width="0.8"/><path d="M1 4.5H14V11Q14 12.5 12.5 12.5H2.5Q1 12.5 1 11Z" fill="#6f7d83"/><path d="M1.5 5H13.5" stroke="#b8c4c8" stroke-width="0.8"/></svg>
<div class="t" style="left:62px;top:599px;letter-spacing:0.5px">Models</div>
<svg class="a" style="left:33px;top:618px" width="9" height="8" viewBox="0 0 9 8"><path d="M0 0H9L4.5 8Z" fill="#7a7a7a"/></svg>
<svg class="a" style="left:44px;top:615px" width="15" height="13" viewBox="0 0 15 13"><path d="M1 2.5Q1 1 2.5 1H6L7.2 2.2H12.5Q14 2.2 14 3.7V11Q14 12.5 12.5 12.5H2.5Q1 12.5 1 11Z" fill="#e8e8e8" stroke="#5e6b70" stroke-width="0.8"/><path d="M1 4.5H14V11Q14 12.5 12.5 12.5H2.5Q1 12.5 1 11Z" fill="#6f7d83"/><path d="M1.5 5H13.5" stroke="#b8c4c8" stroke-width="0.8"/></svg>
<div class="t" style="left:62px;top:615px;letter-spacing:0.5px">Prefabs</div>
<svg class="a" style="left:59px;top:631px" width="14" height="14" viewBox="0 0 14 14"><path d="M1 3.5L7 1L13 3.5L7 6Z" fill="#a8dcf8"/><path d="M1 3.5L7 6V13L1 10.5Z" fill="#3d9ad6"/><path d="M13 3.5L7 6V13L13 10.5Z" fill="#2a7dbd"/></svg>
<div class="t" style="left:76px;top:631px;letter-spacing:0.62px">BlockPrototype04x04x04</div>
<svg class="a" style="left:59px;top:647px" width="14" height="14" viewBox="0 0 14 14"><path d="M1 3.5L7 1L13 3.5L7 6Z" fill="#a8dcf8"/><path d="M1 3.5L7 6V13L1 10.5Z" fill="#3d9ad6"/><path d="M13 3.5L7 6V13L13 10.5Z" fill="#2a7dbd"/></svg>
<div class="t" style="left:76px;top:647px;letter-spacing:0.62px">CubePrototype02x02x02</div>
<svg class="a" style="left:59px;top:663px" width="14" height="14" viewBox="0 0 14 14"><path d="M1 3.5L7 1L13 3.5L7 6Z" fill="#a8dcf8"/><path d="M1 3.5L7 6V13L1 10.5Z" fill="#3d9ad6"/><path d="M13 3.5L7 6V13L13 10.5Z" fill="#2a7dbd"/></svg>
<div class="t" style="left:76px;top:663px;letter-spacing:0.62px">CubePrototype04x04x04</div>
<svg class="a" style="left:59px;top:679px" width="14" height="14" viewBox="0 0 14 14"><path d="M1 3.5L7 1L13 3.5L7 6Z" fill="#a8dcf8"/><path d="M1 3.5L7 6V13L1 10.5Z" fill="#3d9ad6"/><path d="M13 3.5L7 6V13L13 10.5Z" fill="#2a7dbd"/></svg>
<div class="t" style="left:76px;top:679px;letter-spacing:0.62px">CubePrototype08x08x08</div>
<svg class="a" style="left:59px;top:695px" width="14" height="14" viewBox="0 0 14 14"><path d="M1 3.5L7 1L13 3.5L7 6Z" fill="#a8dcf8"/><path d="M1 3.5L7 6V13L1 10.5Z" fill="#3d9ad6"/><path d="M13 3.5L7 6V13L13 10.5Z" fill="#2a7dbd"/></svg>
<div class="t" style="left:76px;top:695px;letter-spacing:0.62px">FloorPrototype04x01x04</div>
<svg class="a" style="left:59px;top:711px" width="14" height="14" viewBox="0 0 14 14"><path d="M1 3.5L7 1L13 3.5L7 6Z" fill="#a8dcf8"/><path d="M1 3.5L7 6V13L1 10.5Z" fill="#3d9ad6"/><path d="M13 3.5L7 6V13L13 10.5Z" fill="#2a7dbd"/></svg>
<div class="t" style="left:76px;top:711px;letter-spacing:0.62px">FloorPrototype08x01x08</div>
<svg class="a" style="left:59px;top:727px" width="14" height="14" viewBox="0 0 14 14"><path d="M1 3.5L7 1L13 3.5L7 6Z" fill="#a8dcf8"/><path d="M1 3.5L7 6V13L1 10.5Z" fill="#3d9ad6"/><path d="M13 3.5L7 6V13L13 10.5Z" fill="#2a7dbd"/></svg>
<div class="t" style="left:76px;top:727px;letter-spacing:0.62px">FloorPrototype64x01x64</div>
<svg class="a" style="left:59px;top:743px" width="14" height="14" viewBox="0 0 14 14"><path d="M1 3.5L7 1L13 3.5L7 6Z" fill="#a8dcf8"/><path d="M1 3.5L7 6V13L1 10.5Z" fill="#3d9ad6"/><path d="M13 3.5L7 6V13L13 10.5Z" fill="#2a7dbd"/></svg>
<div class="t" style="left:76px;top:743px;letter-spacing:0.62px">HousePrototype16x16x24</div>
<svg class="a" style="left:59px;top:759px" width="14" height="14" viewBox="0 0 14 14"><path d="M1 3.5L7 1L13 3.5L7 6Z" fill="#a8dcf8"/><path d="M1 3.5L7 6V13L1 10.5Z" fill="#3d9ad6"/><path d="M13 3.5L7 6V13L13 10.5Z" fill="#2a7dbd"/></svg>
<div class="t" style="left:76px;top:759px;letter-spacing:0.62px">JoinInnerPrototype01x06x01</div>
<svg class="a" style="left:59px;top:775px" width="14" height="14" viewBox="0 0 14 14"><path d="M1 3.5L7 1L13 3.5L7 6Z" fill="#a8dcf8"/><path d="M1 3.5L7 6V13L1 10.5Z" fill="#3d9ad6"/><path d="M13 3.5L7 6V13L13 10.5Z" fill="#2a7dbd"/></svg>
<div class="t" style="left:76px;top:775px;letter-spacing:0.62px">JoinMidPrototype04x06x01</div>
<svg class="a" style="left:59px;top:791px" width="14" height="14" viewBox="0 0 14 14"><path d="M1 3.5L7 1L13 3.5L7 6Z" fill="#a8dcf8"/><path d="M1 3.5L7 6V13L1 10.5Z" fill="#3d9ad6"/><path d="M13 3.5L7 6V13L13 10.5Z" fill="#2a7dbd"/></svg>
<div class="t" style="left:76px;top:791px;letter-spacing:0.62px">JoinOuterPrototype02x06x02</div>
<svg class="a" style="left:59px;top:807px" width="14" height="14" viewBox="0 0 14 14"><path d="M1 3.5L7 1L13 3.5L7 6Z" fill="#a8dcf8"/><path d="M1 3.5L7 6V13L1 10.5Z" fill="#3d9ad6"/><path d="M13 3.5L7 6V13L13 10.5Z" fill="#2a7dbd"/></svg>
<div class="t" style="left:76px;top:807px;letter-spacing:0.62px">PickupPrototype</div>

<!-- CONSOLE -->
<div class="tab" style="left:291px;top:497px;width:98px;height:16px"></div>
<svg class="a" style="left:301px;top:499px" width="10" height="12" viewBox="0 0 10 12"><rect x="0.5" y="0.5" width="9" height="11" fill="#fff" stroke="#222" stroke-width="1"/><path d="M2 3.5H8M2 5.5H6M2 7.5H8M2 9.5H6" stroke="#555" stroke-width="1"/></svg>
<div class="t ls" style="left:314px;top:498px">Console</div>
<svg class="a" style="left:950px;top:505px" width="16" height="7" viewBox="0 0 16 7"><path d="M1 2.5 L6 2.5 L3.5 5Z" fill="#3a3a3a"/><path d="M7 1.5h8M7 3.5h8M7 5.5h8" stroke="#333" stroke-width="1"/></svg>
<div class="a" style="left:290px;top:512px;width:679px;height:312px;background:#dedede;border:1px solid #8c8c8c;border-top:none"></div>
<div class="ptb" style="left:291px;top:512px;width:677px;height:18px"></div>
<div class="a" style="left:296px;top:513px;width:1px;height:16px;background:#a8a8a8"></div>
<div class="t sm2" style="left:301px;top:515px">Clear</div>
<div class="a" style="left:329px;top:513px;width:1px;height:16px;background:#a8a8a8"></div>
<div class="a" style="left:334px;top:513px;width:119px;height:16px;background:#f6f6f6;border-left:1px solid #a8a8a8"></div>
<div class="a" style="left:384px;top:513px;width:1px;height:16px;background:#a8a8a8"></div>
<div class="t sm2" style="left:340px;top:515px">Collapse</div>
<div class="t sm2" style="left:389px;top:515px">Clear on Play</div>
<div class="a" style="left:453px;top:513px;width:1px;height:16px;background:#a8a8a8"></div>
<div class="t sm2" style="left:458px;top:515px">Error Pause</div>
<div class="a" style="left:515px;top:513px;width:1px;height:16px;background:#a8a8a8"></div>
<div class="t sm2" style="left:521px;top:515px">Connected Player</div>
<svg class="a" style="left:606px;top:519px" width="5" height="4" viewBox="0 0 5 4"><path d="M0 0 L5 0 L2.5 3Z" fill="#333"/></svg>
<div class="a" style="left:615px;top:513px;width:1px;height:16px;background:#a8a8a8"></div>
<div class="a" style="left:867px;top:513px;width:32px;height:16px;background:#f6f6f6;border-left:1px solid #a8a8a8"></div>
<div class="a" style="left:899px;top:513px;width:1px;height:16px;background:#a8a8a8"></div>
<div class="a" style="left:931px;top:513px;width:32px;height:16px;background:#f6f6f6;border-left:1px solid #a8a8a8;border-right:1px solid #a8a8a8"></div>
<svg class="a" style="left:871px;top:514px" width="14" height="14" viewBox="0 0 14 14"><path d="M6.5 1A5.3 5 0 1 0 8 11L11 13L10 9.8A5.3 5 0 0 0 6.5 1Z" fill="#fff" stroke="#333" stroke-width="0.9"/><path d="M6.5 3V7.5" stroke="#222" stroke-width="1.5"/><circle cx="6.5" cy="9.3" r="0.85" fill="#222"/></svg>
<div class="t xs" style="left:889px;top:515px">1</div>
<svg class="a" style="left:903px;top:514px" width="14" height="13" viewBox="0 0 14 13"><path d="M7 0.8L13.2 12.2H0.8Z" fill="#eee" stroke="#555" stroke-width="0.9"/><path d="M7 4V8.8" stroke="#888" stroke-width="1.3"/><circle cx="7" cy="10.5" r="0.7" fill="#888"/></svg>
<div class="t xs" style="left:920px;top:515px">0</div>
<svg class="a" style="left:935px;top:514px" width="13" height="13" viewBox="0 0 13 13"><path d="M4 0.5H9L12.5 4V9L9 12.5H4L0.5 9V4Z" fill="#555"/><path d="M6.5 2.8V7.5" stroke="#fff" stroke-width="1.6"/><circle cx="6.5" cy="9.6" r="0.9" fill="#fff"/></svg>
<div class="t xs" style="left:951px;top:515px">0</div>
<svg class="a" style="left:296px;top:536px" width="20" height="19" viewBox="0 0 20 19"><path d="M10 1.5A8 7.3 0 1 0 11 16L14.5 18L13.5 14.6A8 7.3 0 0 0 10 1.5Z" fill="#fff" stroke="#444" stroke-width="1"/><path d="M10 4.3V10.3" stroke="#222" stroke-width="2"/><circle cx="10" cy="12.6" r="1.1" fill="#222"/></svg>
<div class="t" style="left:322px;top:533px;letter-spacing:0.48px">Metal: Editor support disabled, skipping device initialization</div>
<div class="a" style="left:941px;top:536px;width:21px;height:19px;border-radius:10px;background:linear-gradient(#fbfbfb,#e3e3e3);border:1px solid #9a9a9a"></div>
<div class="t xs" style="left:941px;top:538px;width:21px;text-align:center;font-size:11px">1</div>
<div class="a" style="left:291px;top:736px;width:677px;height:1px;background:#5a5a5a"></div>

<!-- STATUS -->
<svg class="a" style="left:2px;top:829px" width="15" height="13" viewBox="0 0 15 13"><path d="M7.5 0.6A6.8 6 0 1 0 8.5 12.4L11.5 12.8L10.8 11A6.8 6 0 0 0 7.5 0.6Z" fill="#fff" stroke="#333" stroke-width="0.9"/><path d="M7.5 2.8V7.4" stroke="#222" stroke-width="1.6"/><circle cx="7.5" cy="9.4" r="0.9" fill="#222"/></svg>
<div class="t" style="left:20px;top:829px;letter-spacing:0.49px">Metal: Editor support disabled, skipping device initialization</div>


<div class="a" style="left:0;top:0;width:1px;height:2px;background:#000"></div>
</body></html>
